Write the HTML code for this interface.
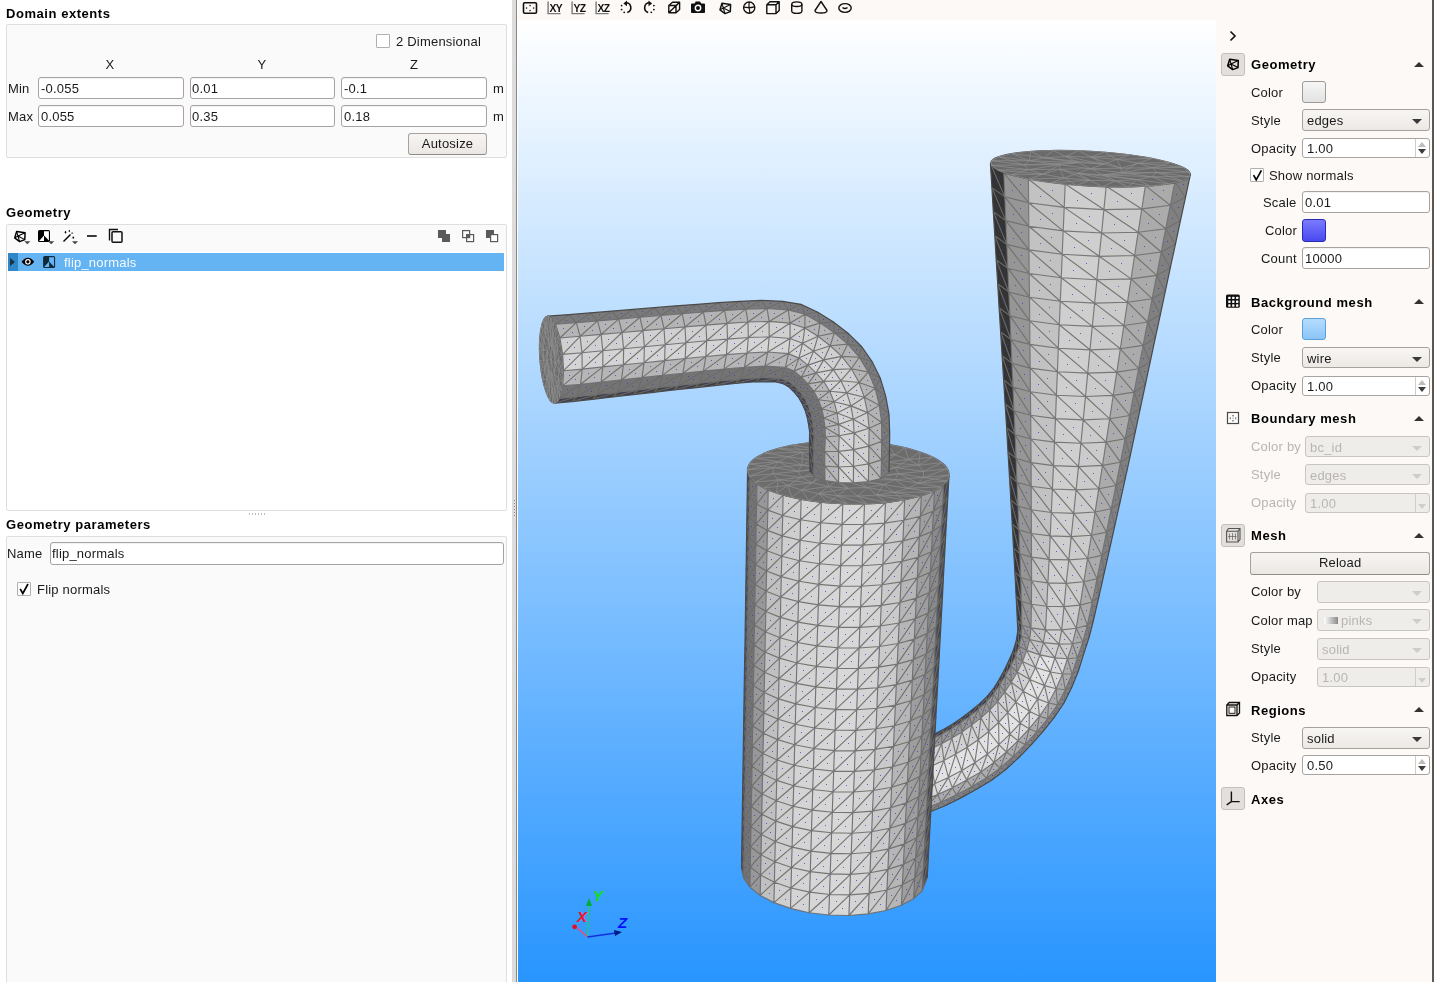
<!DOCTYPE html><html><head><meta charset="utf-8"><style>
*{margin:0;padding:0;box-sizing:border-box}
html,body{width:1434px;height:982px;overflow:hidden;background:#fff;-webkit-font-smoothing:antialiased;font-family:"Liberation Sans",sans-serif;font-size:13px;color:#1a1a1a;letter-spacing:0.2px}
.a{position:absolute}
.t{position:absolute;white-space:nowrap;line-height:15px;height:15px;will-change:transform}
.b{font-weight:bold;letter-spacing:0.55px;color:#000}
.gb{position:absolute;background:#fafafa;border:1px solid #dedede;border-radius:2px}
.in{position:absolute;background:#fff;border:1px solid #a8a39f;border-radius:3px;box-shadow:inset 0 1px 1px rgba(0,0,0,0.06)}
.in span{position:absolute;left:1.8px;top:3px;line-height:15px;will-change:transform}
.btn{position:absolute;will-change:transform;background:linear-gradient(#f7f5f3,#ebe7e3);border:1px solid #a6a19c;border-bottom-color:#8f8a85;border-radius:3px;text-align:center;line-height:20px}
.cb{position:absolute;width:14px;height:14px;background:#fff;border:1px solid #b3afab;border-radius:1px}
.combo{position:absolute;background:linear-gradient(#f8f6f4,#ece8e4);border:1px solid #a6a19c;border-radius:3px}
.combo span{position:absolute;left:4px;top:3px;line-height:15px;will-change:transform}
.combo i{position:absolute;right:7px;top:9px;width:0;height:0;border-left:5px solid transparent;border-right:5px solid transparent;border-top:5px solid #3a3a3a}
.dis{color:#b9b5b1}
.combo.dis{background:#efedea;border-color:#c9c5c1}
.combo.dis i{border-top-color:#d0ccc8}
.spin{position:absolute;background:#fff;border:1px solid #a8a39f;border-radius:3px}
.spin span{position:absolute;left:4px;top:2px;line-height:15px;will-change:transform}
.spin .sb{position:absolute;right:0;top:0;bottom:0;width:14px;border-left:1px solid #d0ccc8}
.spin .up{position:absolute;right:3px;top:3px;border-left:4px solid transparent;border-right:4px solid transparent;border-bottom:5px solid #c0bcb8}
.spin .dn{position:absolute;right:3px;bottom:3px;border-left:4px solid transparent;border-right:4px solid transparent;border-top:5px solid #3c3c3c}
.spin.dis{background:#efedea;border-color:#c9c5c1}
.spin.dis .dn{border-top-color:#d0ccc8}
.spin.dis .up{border-bottom-color:#efedea}
.sw{position:absolute;width:24px;height:23px;border-radius:3px}
.tri{position:absolute;width:0;height:0;border-left:5px solid transparent;border-right:5px solid transparent;border-bottom:5px solid #333}
.ib{position:absolute;width:24px;height:23px;background:#e2dfdc;border:1px solid #c3bfbb;border-radius:3px}
</style></head><body><svg class="a" style="left:0;top:0" width="1434" height="982"><defs><linearGradient id="bg" x1="0" y1="0" x2="0" y2="1"><stop offset="0" stop-color="#ffffff"/><stop offset="1" stop-color="#2895ff"/></linearGradient><clipPath id="vclip"><rect x="518" y="20" width="698" height="962"/></clipPath></defs>
<rect x="518" y="20" width="698" height="962" fill="url(#bg)"/>
<g clip-path="url(#vclip)">
<path d="M990.4,163.6 991.9,187.6 993.3,211.6 994.8,235.7 996.2,259.7 997.7,283.7 999.1,307.7 1000.6,331.7 1002.1,355.7 1003.6,379.8 1005.1,403.8 1006.6,427.8 1008,451.8 1009.4,475.8 1010.8,499.9 1012.2,523.9 1013.5,547.9 1014.9,571.9 1016.1,596 1017.3,620 1017.8,630.7 1016.3,640.6 1013.2,650.8 1008.9,660.6 1004.2,670.2 999.1,679.6 993.5,688.7 986.7,696.9 979,704.3 970.7,711 962.2,717.5 953.5,723.6 944.3,729.1 934.8,733.9 924.9,738 915,742 911.5,746.7 921.8,742.9 932,739 941.9,734.3 951.5,728.8 960.6,722.8 969.5,716.4 978.2,709.6 986.3,702.2 993.5,694 999.7,685.1 1005.4,675.8 1010.7,666.2 1015.5,656.3 1019.2,646 1021.4,635.9 1021.8,625 1021.4,601.3 1020.7,577.5 1019.8,553.7 1018.9,529.9 1018,506.1 1017,482.3 1016.1,458.5 1015.1,434.7 1014,410.9 1013,387.1 1011.9,363.3 1010.9,339.5 1009.9,315.7 1008.8,292 1007.8,268.2 1006.8,244.4 1005.8,220.6 1004.8,196.8 1003.8,173Z" fill="#333333"/>
<path d="M1003.8,173 1004.8,196.8 1005.8,220.6 1006.8,244.4 1007.8,268.2 1008.8,292 1009.9,315.7 1010.9,339.5 1011.9,363.3 1013,387.1 1014,410.9 1015.1,434.7 1016.1,458.5 1017,482.3 1018,506.1 1018.9,529.9 1019.8,553.7 1020.7,577.5 1021.4,601.3 1021.8,625 1021.4,635.9 1019.2,646 1015.5,656.3 1010.7,666.2 1005.4,675.8 999.7,685.1 993.5,694 986.3,702.2 978.2,709.6 969.5,716.4 960.6,722.8 951.5,728.8 941.9,734.3 932,739 921.8,742.9 911.5,746.7 908.7,756.2 919.9,752.6 931,748.6 941.7,743.7 952,738.1 962,731.9 971.6,725.1 980.9,717.9 989.7,710 997.7,701.4 1004.8,692 1011.3,682.2 1017.2,672 1022.5,661.5 1026.7,650.4 1029.7,639.5 1031,627.9 1031.4,604.3 1031.6,580.7 1031.5,557.1 1031.4,533.5 1031.3,509.8 1031.2,486.2 1031.1,462.6 1030.9,439 1030.7,415.3 1030.4,391.7 1030.2,368.1 1029.9,344.4 1029.7,320.8 1029.5,297.2 1029.2,273.5 1029,249.9 1028.8,226.3 1028.6,202.7 1028.4,179Z" fill="#969696"/>
<path d="M1028.4,179 1028.6,202.7 1028.8,226.3 1029,249.9 1029.2,273.5 1029.5,297.2 1029.7,320.8 1029.9,344.4 1030.2,368.1 1030.4,391.7 1030.7,415.3 1030.9,439 1031.1,462.6 1031.2,486.2 1031.3,509.8 1031.4,533.5 1031.5,557.1 1031.6,580.7 1031.4,604.3 1031,627.9 1029.7,639.5 1026.7,650.4 1022.5,661.5 1017.2,672 1011.3,682.2 1004.8,692 997.7,701.4 989.7,710 980.9,717.9 971.6,725.1 962,731.9 952,738.1 941.7,743.7 931,748.6 919.9,752.6 908.7,756.2 906.3,773.8 919.1,770.3 931.7,765.9 943.9,760.4 955.7,754.1 967.2,747.3 978.2,739.7 988.7,731.5 998.6,722.5 1007.7,712.7 1015.9,702.2 1023.3,691.2 1029.8,679.5 1035.5,667.5 1039.9,654.9 1043.4,642.6 1045.5,629.8 1046.8,606.3 1047.9,582.9 1049.1,559.4 1050.2,535.9 1051.3,512.5 1052.4,489 1053.5,465.6 1054.5,442.1 1055.5,418.6 1056.4,395.2 1057.4,371.7 1058.3,348.2 1059.3,324.7 1060.3,301.3 1061.3,277.8 1062.2,254.3 1063.2,230.9 1064.2,207.4 1065.2,183.9Z" fill="#c2c2c2"/>
<path d="M1065.2,183.9 1064.2,207.4 1063.2,230.9 1062.2,254.3 1061.3,277.8 1060.3,301.3 1059.3,324.7 1058.3,348.2 1057.4,371.7 1056.4,395.2 1055.5,418.6 1054.5,442.1 1053.5,465.6 1052.4,489 1051.3,512.5 1050.2,535.9 1049.1,559.4 1047.9,582.9 1046.8,606.3 1045.5,629.8 1043.4,642.6 1039.9,654.9 1035.5,667.5 1029.8,679.5 1023.3,691.2 1015.9,702.2 1007.7,712.7 998.6,722.5 988.7,731.5 978.2,739.7 967.2,747.3 955.7,754.1 943.9,760.4 931.7,765.9 919.1,770.3 906.3,773.8 905.7,792.2 920.4,788.8 934.6,783.7 948.4,777.4 961.8,770.4 974.8,762.8 987.2,754.2 998.9,744.6 1009.9,734.2 1020.2,723.2 1029.4,711.3 1037.7,698.9 1044.5,685.6 1050.4,672 1054.9,657.9 1059,644.1 1061.7,629.8 1064,606.6 1066.2,583.3 1068.8,559.9 1071.2,536.6 1073.7,513.3 1076.1,489.9 1078.5,466.6 1080.9,443.2 1083.2,419.9 1085.5,396.5 1087.7,373.1 1090,349.8 1092.3,326.4 1094.6,303.1 1096.9,279.7 1099.2,256.3 1101.6,233 1103.9,209.6 1106.2,186.3Z" fill="#cfcfcf"/>
<path d="M1106.2,186.3 1103.9,209.6 1101.6,233 1099.2,256.3 1096.9,279.7 1094.6,303.1 1092.3,326.4 1090,349.8 1087.7,373.1 1085.5,396.5 1083.2,419.9 1080.9,443.2 1078.5,466.6 1076.1,489.9 1073.7,513.3 1071.2,536.6 1068.8,559.9 1066.2,583.3 1064,606.6 1061.7,629.8 1059,644.1 1054.9,657.9 1050.4,672 1044.5,685.6 1037.7,698.9 1029.4,711.3 1020.2,723.2 1009.9,734.2 998.9,744.6 987.2,754.2 974.8,762.8 961.8,770.4 948.4,777.4 934.6,783.7 920.4,788.8 905.7,792.2 906.5,803.7 922.4,800.2 937.7,794.6 952.4,787.7 966.7,780.1 980.8,771.9 994,762.5 1006.4,752 1018.1,740.7 1029.1,728.8 1039.4,716.3 1048.6,703 1056.1,688.8 1062.5,674 1067.5,658.7 1072.5,643.7 1076.2,628.2 1080.1,605.1 1083.8,581.8 1087.6,558.5 1091.4,535.3 1095.1,512 1098.8,488.7 1102.5,465.4 1106.1,442.1 1109.7,418.8 1113.2,395.4 1116.8,372.1 1120.3,348.8 1123.9,325.5 1127.5,302.2 1131.1,278.9 1134.6,255.5 1138.2,232.2 1141.8,208.9 1145.4,185.6Z" fill="#cbcbcb"/>
<path d="M1145.4,185.6 1141.8,208.9 1138.2,232.2 1134.6,255.5 1131.1,278.9 1127.5,302.2 1123.9,325.5 1120.3,348.8 1116.8,372.1 1113.2,395.4 1109.7,418.8 1106.1,442.1 1102.5,465.4 1098.8,488.7 1095.1,512 1091.4,535.3 1087.6,558.5 1083.8,581.8 1080.1,605.1 1076.2,628.2 1072.5,643.7 1067.5,658.7 1062.5,674 1056.1,688.8 1048.6,703 1039.4,716.3 1029.1,728.8 1018.1,740.7 1006.4,752 994,762.5 980.8,771.9 966.7,780.1 952.4,787.7 937.7,794.6 922.4,800.2 906.5,803.7 908.3,811.9 925,808.3 941,802.3 956.4,794.8 971.6,786.8 986.3,778.1 1000.1,768 1013,756.7 1025.1,744.6 1036.7,732 1047.6,718.8 1057.4,704.8 1065.3,689.7 1072.1,674 1077.4,657.8 1082.9,641.7 1087.3,625.3 1092.2,602 1097,578.7 1101.8,555.4 1106.5,532.1 1111.2,508.8 1115.9,485.5 1120.5,462.2 1125.1,438.8 1129.6,415.5 1134.1,392.1 1138.6,368.7 1143.1,345.4 1147.6,322 1152.1,298.7 1156.7,275.4 1161.2,252 1165.7,228.7 1170.3,205.3 1174.8,182Z" fill="#ababab"/>
<path d="M1174.8,182 1170.3,205.3 1165.7,228.7 1161.2,252 1156.7,275.4 1152.1,298.7 1147.6,322 1143.1,345.4 1138.6,368.7 1134.1,392.1 1129.6,415.5 1125.1,438.8 1120.5,462.2 1115.9,485.5 1111.2,508.8 1106.5,532.1 1101.8,555.4 1097,578.7 1092.2,602 1087.3,625.3 1082.9,641.7 1077.4,657.8 1072.1,674 1065.3,689.7 1057.4,704.8 1047.6,718.8 1036.7,732 1025.1,744.6 1013,756.7 1000.1,768 986.3,778.1 971.6,786.8 956.4,794.8 941,802.3 925,808.3 908.3,811.9 912,816 929.2,812.2 945.6,805.5 961.4,797.6 976.9,789.1 992,779.9 1006.1,769.2 1019.1,757.3 1031.4,744.6 1043.1,731.4 1054.1,717.6 1064,703 1071.9,687.1 1078.5,670.7 1083.7,653.9 1089.2,637.1 1093.5,620 1098.9,596.6 1104.2,573.1 1109.5,549.7 1114.7,526.2 1119.9,502.8 1125.1,479.3 1130.2,455.8 1135.2,432.3 1140.2,408.8 1145.2,385.3 1150.2,361.8 1155.2,338.3 1160.3,314.8 1165.3,291.3 1170.3,267.8 1175.4,244.3 1180.4,220.8 1185.5,197.3 1190.5,173.8Z" fill="#808080"/>
<path d="M1026.7,650.4 1022.5,661.5 1017.2,672 1011.3,682.2 1004.8,692 997.7,701.4 989.7,710 980.9,717.9 971.6,725.1 962,731.9 952,738.1 941.7,743.7 931,748.6 919.9,752.6 908.7,756.2 906.3,773.8 919.1,770.3 931.7,765.9 943.9,760.4 955.7,754.1 967.2,747.3 978.2,739.7 988.7,731.5 998.6,722.5 1007.7,712.7 1015.9,702.2 1023.3,691.2 1029.8,679.5 1035.5,667.5 1039.9,654.9Z" fill="#ffffff" fill-opacity="0.25"/>
<path d="M1039.9,654.9 1035.5,667.5 1029.8,679.5 1023.3,691.2 1015.9,702.2 1007.7,712.7 998.6,722.5 988.7,731.5 978.2,739.7 967.2,747.3 955.7,754.1 943.9,760.4 931.7,765.9 919.1,770.3 906.3,773.8 905.7,792.2 920.4,788.8 934.6,783.7 948.4,777.4 961.8,770.4 974.8,762.8 987.2,754.2 998.9,744.6 1009.9,734.2 1020.2,723.2 1029.4,711.3 1037.7,698.9 1044.5,685.6 1050.4,672 1054.9,657.9Z" fill="#ffffff" fill-opacity="0.4"/>
<path d="M1054.9,657.9 1050.4,672 1044.5,685.6 1037.7,698.9 1029.4,711.3 1020.2,723.2 1009.9,734.2 998.9,744.6 987.2,754.2 974.8,762.8 961.8,770.4 948.4,777.4 934.6,783.7 920.4,788.8 905.7,792.2 906.5,803.7 922.4,800.2 937.7,794.6 952.4,787.7 966.7,780.1 980.8,771.9 994,762.5 1006.4,752 1018.1,740.7 1029.1,728.8 1039.4,716.3 1048.6,703 1056.1,688.8 1062.5,674 1067.5,658.7Z" fill="#ffffff" fill-opacity="0.3"/>
<path d="M990.4,163.6 1003.8,173 1028.4,179 1065.2,183.9 1106.2,186.3 1145.4,185.6 1174.8,182 1190.5,173.8 M991.9,187.6 1004.8,196.8 1028.6,202.7 1064.2,207.4 1103.9,209.6 1141.8,208.9 1170.3,205.3 1185.5,197.3 M993.3,211.6 1005.8,220.6 1028.8,226.3 1063.2,230.9 1101.6,233 1138.2,232.2 1165.7,228.7 1180.4,220.8 M994.8,235.7 1006.8,244.4 1029,249.9 1062.2,254.3 1099.2,256.3 1134.6,255.5 1161.2,252 1175.4,244.3 M996.2,259.7 1007.8,268.2 1029.2,273.5 1061.3,277.8 1096.9,279.7 1131.1,278.9 1156.7,275.4 1170.3,267.8 M997.7,283.7 1008.8,292 1029.5,297.2 1060.3,301.3 1094.6,303.1 1127.5,302.2 1152.1,298.7 1165.3,291.3 M999.1,307.7 1009.9,315.7 1029.7,320.8 1059.3,324.7 1092.3,326.4 1123.9,325.5 1147.6,322 1160.3,314.8 M1000.6,331.7 1010.9,339.5 1029.9,344.4 1058.3,348.2 1090,349.8 1120.3,348.8 1143.1,345.4 1155.2,338.3 M1002.1,355.7 1011.9,363.3 1030.2,368.1 1057.4,371.7 1087.7,373.1 1116.8,372.1 1138.6,368.7 1150.2,361.8 M1003.6,379.8 1013,387.1 1030.4,391.7 1056.4,395.2 1085.5,396.5 1113.2,395.4 1134.1,392.1 1145.2,385.3 M1005.1,403.8 1014,410.9 1030.7,415.3 1055.5,418.6 1083.2,419.9 1109.7,418.8 1129.6,415.5 1140.2,408.8 M1006.6,427.8 1015.1,434.7 1030.9,439 1054.5,442.1 1080.9,443.2 1106.1,442.1 1125.1,438.8 1135.2,432.3 M1008,451.8 1016.1,458.5 1031.1,462.6 1053.5,465.6 1078.5,466.6 1102.5,465.4 1120.5,462.2 1130.2,455.8 M1009.4,475.8 1017,482.3 1031.2,486.2 1052.4,489 1076.1,489.9 1098.8,488.7 1115.9,485.5 1125.1,479.3 M1010.8,499.9 1018,506.1 1031.3,509.8 1051.3,512.5 1073.7,513.3 1095.1,512 1111.2,508.8 1119.9,502.8 M1012.2,523.9 1018.9,529.9 1031.4,533.5 1050.2,535.9 1071.2,536.6 1091.4,535.3 1106.5,532.1 1114.7,526.2 M1013.5,547.9 1019.8,553.7 1031.5,557.1 1049.1,559.4 1068.8,559.9 1087.6,558.5 1101.8,555.4 1109.5,549.7 M1014.9,571.9 1020.7,577.5 1031.6,580.7 1047.9,582.9 1066.2,583.3 1083.8,581.8 1097,578.7 1104.2,573.1 M1016.1,596 1021.4,601.3 1031.4,604.3 1046.8,606.3 1064,606.6 1080.1,605.1 1092.2,602 1098.9,596.6 M1017.3,620 1021.8,625 1031,627.9 1045.5,629.8 1061.7,629.8 1076.2,628.2 1087.3,625.3 1093.5,620 M1017.8,630.7 1021.4,635.9 1029.7,639.5 1043.4,642.6 1059,644.1 1072.5,643.7 1082.9,641.7 1089.2,637.1 M1016.3,640.6 1019.2,646 1026.7,650.4 1039.9,654.9 1054.9,657.9 1067.5,658.7 1077.4,657.8 1083.7,653.9 M1013.2,650.8 1015.5,656.3 1022.5,661.5 1035.5,667.5 1050.4,672 1062.5,674 1072.1,674 1078.5,670.7 M1008.9,660.6 1010.7,666.2 1017.2,672 1029.8,679.5 1044.5,685.6 1056.1,688.8 1065.3,689.7 1071.9,687.1 M1004.2,670.2 1005.4,675.8 1011.3,682.2 1023.3,691.2 1037.7,698.9 1048.6,703 1057.4,704.8 1064,703 M999.1,679.6 999.7,685.1 1004.8,692 1015.9,702.2 1029.4,711.3 1039.4,716.3 1047.6,718.8 1054.1,717.6 M993.5,688.7 993.5,694 997.7,701.4 1007.7,712.7 1020.2,723.2 1029.1,728.8 1036.7,732 1043.1,731.4 M986.7,696.9 986.3,702.2 989.7,710 998.6,722.5 1009.9,734.2 1018.1,740.7 1025.1,744.6 1031.4,744.6 M979,704.3 978.2,709.6 980.9,717.9 988.7,731.5 998.9,744.6 1006.4,752 1013,756.7 1019.1,757.3 M970.7,711 969.5,716.4 971.6,725.1 978.2,739.7 987.2,754.2 994,762.5 1000.1,768 1006.1,769.2 M962.2,717.5 960.6,722.8 962,731.9 967.2,747.3 974.8,762.8 980.8,771.9 986.3,778.1 992,779.9 M953.5,723.6 951.5,728.8 952,738.1 955.7,754.1 961.8,770.4 966.7,780.1 971.6,786.8 976.9,789.1 M944.3,729.1 941.9,734.3 941.7,743.7 943.9,760.4 948.4,777.4 952.4,787.7 956.4,794.8 961.4,797.6 M934.8,733.9 932,739 931,748.6 931.7,765.9 934.6,783.7 937.7,794.6 941,802.3 945.6,805.5 M924.9,738 921.8,742.9 919.9,752.6 919.1,770.3 920.4,788.8 922.4,800.2 925,808.3 929.2,812.2 M915,742 911.5,746.7 908.7,756.2 906.3,773.8 905.7,792.2 906.5,803.7 908.3,811.9 912,816 M1003.8,173 1004.8,196.8 1005.8,220.6 1006.8,244.4 1007.8,268.2 1008.8,292 1009.9,315.7 1010.9,339.5 1011.9,363.3 1013,387.1 1014,410.9 1015.1,434.7 1016.1,458.5 1017,482.3 1018,506.1 1018.9,529.9 1019.8,553.7 1020.7,577.5 1021.4,601.3 1021.8,625 1021.4,635.9 1019.2,646 1015.5,656.3 1010.7,666.2 1005.4,675.8 999.7,685.1 993.5,694 986.3,702.2 978.2,709.6 969.5,716.4 960.6,722.8 951.5,728.8 941.9,734.3 932,739 921.8,742.9 911.5,746.7 M1028.4,179 1028.6,202.7 1028.8,226.3 1029,249.9 1029.2,273.5 1029.5,297.2 1029.7,320.8 1029.9,344.4 1030.2,368.1 1030.4,391.7 1030.7,415.3 1030.9,439 1031.1,462.6 1031.2,486.2 1031.3,509.8 1031.4,533.5 1031.5,557.1 1031.6,580.7 1031.4,604.3 1031,627.9 1029.7,639.5 1026.7,650.4 1022.5,661.5 1017.2,672 1011.3,682.2 1004.8,692 997.7,701.4 989.7,710 980.9,717.9 971.6,725.1 962,731.9 952,738.1 941.7,743.7 931,748.6 919.9,752.6 908.7,756.2 M1065.2,183.9 1064.2,207.4 1063.2,230.9 1062.2,254.3 1061.3,277.8 1060.3,301.3 1059.3,324.7 1058.3,348.2 1057.4,371.7 1056.4,395.2 1055.5,418.6 1054.5,442.1 1053.5,465.6 1052.4,489 1051.3,512.5 1050.2,535.9 1049.1,559.4 1047.9,582.9 1046.8,606.3 1045.5,629.8 1043.4,642.6 1039.9,654.9 1035.5,667.5 1029.8,679.5 1023.3,691.2 1015.9,702.2 1007.7,712.7 998.6,722.5 988.7,731.5 978.2,739.7 967.2,747.3 955.7,754.1 943.9,760.4 931.7,765.9 919.1,770.3 906.3,773.8 M1106.2,186.3 1103.9,209.6 1101.6,233 1099.2,256.3 1096.9,279.7 1094.6,303.1 1092.3,326.4 1090,349.8 1087.7,373.1 1085.5,396.5 1083.2,419.9 1080.9,443.2 1078.5,466.6 1076.1,489.9 1073.7,513.3 1071.2,536.6 1068.8,559.9 1066.2,583.3 1064,606.6 1061.7,629.8 1059,644.1 1054.9,657.9 1050.4,672 1044.5,685.6 1037.7,698.9 1029.4,711.3 1020.2,723.2 1009.9,734.2 998.9,744.6 987.2,754.2 974.8,762.8 961.8,770.4 948.4,777.4 934.6,783.7 920.4,788.8 905.7,792.2 M1145.4,185.6 1141.8,208.9 1138.2,232.2 1134.6,255.5 1131.1,278.9 1127.5,302.2 1123.9,325.5 1120.3,348.8 1116.8,372.1 1113.2,395.4 1109.7,418.8 1106.1,442.1 1102.5,465.4 1098.8,488.7 1095.1,512 1091.4,535.3 1087.6,558.5 1083.8,581.8 1080.1,605.1 1076.2,628.2 1072.5,643.7 1067.5,658.7 1062.5,674 1056.1,688.8 1048.6,703 1039.4,716.3 1029.1,728.8 1018.1,740.7 1006.4,752 994,762.5 980.8,771.9 966.7,780.1 952.4,787.7 937.7,794.6 922.4,800.2 906.5,803.7 M1174.8,182 1170.3,205.3 1165.7,228.7 1161.2,252 1156.7,275.4 1152.1,298.7 1147.6,322 1143.1,345.4 1138.6,368.7 1134.1,392.1 1129.6,415.5 1125.1,438.8 1120.5,462.2 1115.9,485.5 1111.2,508.8 1106.5,532.1 1101.8,555.4 1097,578.7 1092.2,602 1087.3,625.3 1082.9,641.7 1077.4,657.8 1072.1,674 1065.3,689.7 1057.4,704.8 1047.6,718.8 1036.7,732 1025.1,744.6 1013,756.7 1000.1,768 986.3,778.1 971.6,786.8 956.4,794.8 941,802.3 925,808.3 908.3,811.9 M990.4,163.6 1004.8,196.8 M1003.8,173 1028.6,202.7 M1028.4,179 1064.2,207.4 M1065.2,183.9 1103.9,209.6 M1106.2,186.3 1141.8,208.9 M1145.4,185.6 1170.3,205.3 M1174.8,182 1185.5,197.3 M991.9,187.6 1005.8,220.6 M1004.8,196.8 1028.8,226.3 M1028.6,202.7 1063.2,230.9 M1064.2,207.4 1101.6,233 M1103.9,209.6 1138.2,232.2 M1141.8,208.9 1165.7,228.7 M1170.3,205.3 1180.4,220.8 M993.3,211.6 1006.8,244.4 M1005.8,220.6 1029,249.9 M1028.8,226.3 1062.2,254.3 M1063.2,230.9 1099.2,256.3 M1101.6,233 1134.6,255.5 M1138.2,232.2 1161.2,252 M1165.7,228.7 1175.4,244.3 M994.8,235.7 1007.8,268.2 M1006.8,244.4 1029.2,273.5 M1029,249.9 1061.3,277.8 M1062.2,254.3 1096.9,279.7 M1099.2,256.3 1131.1,278.9 M1134.6,255.5 1156.7,275.4 M1161.2,252 1170.3,267.8 M996.2,259.7 1008.8,292 M1007.8,268.2 1029.5,297.2 M1029.2,273.5 1060.3,301.3 M1061.3,277.8 1094.6,303.1 M1096.9,279.7 1127.5,302.2 M1131.1,278.9 1152.1,298.7 M1156.7,275.4 1165.3,291.3 M997.7,283.7 1009.9,315.7 M1008.8,292 1029.7,320.8 M1029.5,297.2 1059.3,324.7 M1060.3,301.3 1092.3,326.4 M1094.6,303.1 1123.9,325.5 M1127.5,302.2 1147.6,322 M1152.1,298.7 1160.3,314.8 M999.1,307.7 1010.9,339.5 M1009.9,315.7 1029.9,344.4 M1029.7,320.8 1058.3,348.2 M1059.3,324.7 1090,349.8 M1092.3,326.4 1120.3,348.8 M1123.9,325.5 1143.1,345.4 M1147.6,322 1155.2,338.3 M1000.6,331.7 1011.9,363.3 M1010.9,339.5 1030.2,368.1 M1029.9,344.4 1057.4,371.7 M1058.3,348.2 1087.7,373.1 M1090,349.8 1116.8,372.1 M1120.3,348.8 1138.6,368.7 M1143.1,345.4 1150.2,361.8 M1002.1,355.7 1013,387.1 M1011.9,363.3 1030.4,391.7 M1030.2,368.1 1056.4,395.2 M1057.4,371.7 1085.5,396.5 M1087.7,373.1 1113.2,395.4 M1116.8,372.1 1134.1,392.1 M1138.6,368.7 1145.2,385.3 M1003.6,379.8 1014,410.9 M1013,387.1 1030.7,415.3 M1030.4,391.7 1055.5,418.6 M1056.4,395.2 1083.2,419.9 M1085.5,396.5 1109.7,418.8 M1113.2,395.4 1129.6,415.5 M1134.1,392.1 1140.2,408.8 M1005.1,403.8 1015.1,434.7 M1014,410.9 1030.9,439 M1030.7,415.3 1054.5,442.1 M1055.5,418.6 1080.9,443.2 M1083.2,419.9 1106.1,442.1 M1109.7,418.8 1125.1,438.8 M1129.6,415.5 1135.2,432.3 M1006.6,427.8 1016.1,458.5 M1015.1,434.7 1031.1,462.6 M1030.9,439 1053.5,465.6 M1054.5,442.1 1078.5,466.6 M1080.9,443.2 1102.5,465.4 M1106.1,442.1 1120.5,462.2 M1125.1,438.8 1130.2,455.8 M1008,451.8 1017,482.3 M1016.1,458.5 1031.2,486.2 M1031.1,462.6 1052.4,489 M1053.5,465.6 1076.1,489.9 M1078.5,466.6 1098.8,488.7 M1102.5,465.4 1115.9,485.5 M1120.5,462.2 1125.1,479.3 M1009.4,475.8 1018,506.1 M1017,482.3 1031.3,509.8 M1031.2,486.2 1051.3,512.5 M1052.4,489 1073.7,513.3 M1076.1,489.9 1095.1,512 M1098.8,488.7 1111.2,508.8 M1115.9,485.5 1119.9,502.8 M1010.8,499.9 1018.9,529.9 M1018,506.1 1031.4,533.5 M1031.3,509.8 1050.2,535.9 M1051.3,512.5 1071.2,536.6 M1073.7,513.3 1091.4,535.3 M1095.1,512 1106.5,532.1 M1111.2,508.8 1114.7,526.2 M1012.2,523.9 1019.8,553.7 M1018.9,529.9 1031.5,557.1 M1031.4,533.5 1049.1,559.4 M1050.2,535.9 1068.8,559.9 M1071.2,536.6 1087.6,558.5 M1091.4,535.3 1101.8,555.4 M1106.5,532.1 1109.5,549.7 M1013.5,547.9 1020.7,577.5 M1019.8,553.7 1031.6,580.7 M1031.5,557.1 1047.9,582.9 M1049.1,559.4 1066.2,583.3 M1068.8,559.9 1083.8,581.8 M1087.6,558.5 1097,578.7 M1101.8,555.4 1104.2,573.1 M1014.9,571.9 1021.4,601.3 M1020.7,577.5 1031.4,604.3 M1031.6,580.7 1046.8,606.3 M1047.9,582.9 1064,606.6 M1066.2,583.3 1080.1,605.1 M1083.8,581.8 1092.2,602 M1097,578.7 1098.9,596.6 M1016.1,596 1021.8,625 M1021.4,601.3 1031,627.9 M1031.4,604.3 1045.5,629.8 M1046.8,606.3 1061.7,629.8 M1064,606.6 1076.2,628.2 M1080.1,605.1 1087.3,625.3 M1092.2,602 1093.5,620 M1017.3,620 1021.4,635.9 M1021.8,625 1029.7,639.5 M1031,627.9 1043.4,642.6 M1045.5,629.8 1059,644.1 M1061.7,629.8 1072.5,643.7 M1076.2,628.2 1082.9,641.7 M1087.3,625.3 1089.2,637.1 M1017.8,630.7 1019.2,646 M1021.4,635.9 1026.7,650.4 M1029.7,639.5 1039.9,654.9 M1043.4,642.6 1054.9,657.9 M1059,644.1 1067.5,658.7 M1072.5,643.7 1077.4,657.8 M1082.9,641.7 1083.7,653.9 M1016.3,640.6 1015.5,656.3 M1019.2,646 1022.5,661.5 M1026.7,650.4 1035.5,667.5 M1039.9,654.9 1050.4,672 M1054.9,657.9 1062.5,674 M1067.5,658.7 1072.1,674 M1077.4,657.8 1078.5,670.7 M1013.2,650.8 1010.7,666.2 M1015.5,656.3 1017.2,672 M1022.5,661.5 1029.8,679.5 M1035.5,667.5 1044.5,685.6 M1050.4,672 1056.1,688.8 M1062.5,674 1065.3,689.7 M1072.1,674 1071.9,687.1 M1008.9,660.6 1005.4,675.8 M1010.7,666.2 1011.3,682.2 M1017.2,672 1023.3,691.2 M1029.8,679.5 1037.7,698.9 M1044.5,685.6 1048.6,703 M1056.1,688.8 1057.4,704.8 M1065.3,689.7 1064,703 M1004.2,670.2 999.7,685.1 M1005.4,675.8 1004.8,692 M1011.3,682.2 1015.9,702.2 M1023.3,691.2 1029.4,711.3 M1037.7,698.9 1039.4,716.3 M1048.6,703 1047.6,718.8 M1057.4,704.8 1054.1,717.6 M999.1,679.6 993.5,694 M999.7,685.1 997.7,701.4 M1004.8,692 1007.7,712.7 M1015.9,702.2 1020.2,723.2 M1029.4,711.3 1029.1,728.8 M1039.4,716.3 1036.7,732 M1047.6,718.8 1043.1,731.4 M993.5,688.7 986.3,702.2 M993.5,694 989.7,710 M997.7,701.4 998.6,722.5 M1007.7,712.7 1009.9,734.2 M1020.2,723.2 1018.1,740.7 M1029.1,728.8 1025.1,744.6 M1036.7,732 1031.4,744.6 M986.7,696.9 978.2,709.6 M986.3,702.2 980.9,717.9 M989.7,710 988.7,731.5 M998.6,722.5 998.9,744.6 M1009.9,734.2 1006.4,752 M1018.1,740.7 1013,756.7 M1025.1,744.6 1019.1,757.3 M979,704.3 969.5,716.4 M978.2,709.6 971.6,725.1 M980.9,717.9 978.2,739.7 M988.7,731.5 987.2,754.2 M998.9,744.6 994,762.5 M1006.4,752 1000.1,768 M1013,756.7 1006.1,769.2 M970.7,711 960.6,722.8 M969.5,716.4 962,731.9 M971.6,725.1 967.2,747.3 M978.2,739.7 974.8,762.8 M987.2,754.2 980.8,771.9 M994,762.5 986.3,778.1 M1000.1,768 992,779.9 M962.2,717.5 951.5,728.8 M960.6,722.8 952,738.1 M962,731.9 955.7,754.1 M967.2,747.3 961.8,770.4 M974.8,762.8 966.7,780.1 M980.8,771.9 971.6,786.8 M986.3,778.1 976.9,789.1 M953.5,723.6 941.9,734.3 M951.5,728.8 941.7,743.7 M952,738.1 943.9,760.4 M955.7,754.1 948.4,777.4 M961.8,770.4 952.4,787.7 M966.7,780.1 956.4,794.8 M971.6,786.8 961.4,797.6 M944.3,729.1 932,739 M941.9,734.3 931,748.6 M941.7,743.7 931.7,765.9 M943.9,760.4 934.6,783.7 M948.4,777.4 937.7,794.6 M952.4,787.7 941,802.3 M956.4,794.8 945.6,805.5 M934.8,733.9 921.8,742.9 M932,739 919.9,752.6 M931,748.6 919.1,770.3 M931.7,765.9 920.4,788.8 M934.6,783.7 922.4,800.2 M937.7,794.6 925,808.3 M941,802.3 929.2,812.2 M924.9,738 911.5,746.7 M921.8,742.9 908.7,756.2 M919.9,752.6 906.3,773.8 M919.1,770.3 905.7,792.2 M920.4,788.8 906.5,803.7 M922.4,800.2 908.3,811.9 M925,808.3 912,816" fill="none" stroke="#6e6e6e" stroke-width="1.15" stroke-opacity="0.9"/>
<path d="M995 182h1v1h-1zM999 177h1v1h-1zM1012 190h1v1h-1zM1020 184h1v1h-1zM1040 196h1v1h-1zM1052 190h1v1h-1zM1077 200h1v1h-1zM1091 193h1v1h-1zM1117 201h1v1h-1zM1131 193h1v1h-1zM1152 199h1v1h-1zM1163 190h1v1h-1zM1176 194h1v1h-1zM1183 184h1v1h-1zM996 206h1v1h-1zM1000 201h1v1h-1zM1013 214h1v1h-1zM1020 208h1v1h-1zM1040 219h1v1h-1zM1052 213h1v1h-1zM1076 223h1v1h-1zM1089 216h1v1h-1zM1114 224h1v1h-1zM1127 216h1v1h-1zM1148 223h1v1h-1zM1159 214h1v1h-1zM1172 218h1v1h-1zM1178 207h1v1h-1zM998 230h1v1h-1zM1001 225h1v1h-1zM1013 238h1v1h-1zM1021 232h1v1h-1zM1040 243h1v1h-1zM1051 237h1v1h-1zM1074 247h1v1h-1zM1088 240h1v1h-1zM1111 248h1v1h-1zM1124 240h1v1h-1zM1144 246h1v1h-1zM1155 237h1v1h-1zM1167 241h1v1h-1zM1173 231h1v1h-1zM999 254h1v1h-1zM1003 249h1v1h-1zM1014 262h1v1h-1zM1021 255h1v1h-1zM1039 267h1v1h-1zM1050 260h1v1h-1zM1073 270h1v1h-1zM1086 263h1v1h-1zM1109 271h1v1h-1zM1121 263h1v1h-1zM1140 269h1v1h-1zM1150 260h1v1h-1zM1162 265h1v1h-1zM1168 254h1v1h-1zM1000 278h1v1h-1zM1004 273h1v1h-1zM1015 285h1v1h-1zM1022 279h1v1h-1zM1039 290h1v1h-1zM1050 284h1v1h-1zM1072 294h1v1h-1zM1084 286h1v1h-1zM1106 294h1v1h-1zM1118 286h1v1h-1zM1136 293h1v1h-1zM1146 284h1v1h-1zM1158 288h1v1h-1zM1164 278h1v1h-1zM1002 302h1v1h-1zM1005 297h1v1h-1zM1016 309h1v1h-1zM1022 303h1v1h-1zM1039 314h1v1h-1zM1049 307h1v1h-1zM1070 317h1v1h-1zM1082 310h1v1h-1zM1103 318h1v1h-1zM1115 310h1v1h-1zM1132 316h1v1h-1zM1142 307h1v1h-1zM1153 311h1v1h-1zM1159 301h1v1h-1zM1003 326h1v1h-1zM1006 321h1v1h-1zM1016 333h1v1h-1zM1023 326h1v1h-1zM1039 337h1v1h-1zM1049 331h1v1h-1zM1069 340h1v1h-1zM1080 333h1v1h-1zM1100 341h1v1h-1zM1112 333h1v1h-1zM1129 339h1v1h-1zM1138 330h1v1h-1zM1148 335h1v1h-1zM1154 325h1v1h-1zM1004 350h1v1h-1zM1007 344h1v1h-1zM1017 356h1v1h-1zM1023 350h1v1h-1zM1039 361h1v1h-1zM1048 354h1v1h-1zM1067 364h1v1h-1zM1078 357h1v1h-1zM1098 365h1v1h-1zM1109 356h1v1h-1zM1125 363h1v1h-1zM1133 354h1v1h-1zM1143 358h1v1h-1zM1149 348h1v1h-1zM1006 374h1v1h-1zM1008 368h1v1h-1zM1018 380h1v1h-1zM1024 374h1v1h-1zM1038 384h1v1h-1zM1047 378h1v1h-1zM1066 387h1v1h-1zM1076 380h1v1h-1zM1095 388h1v1h-1zM1105 380h1v1h-1zM1121 386h1v1h-1zM1129 377h1v1h-1zM1139 382h1v1h-1zM1144 371h1v1h-1zM1007 398h1v1h-1zM1010 392h1v1h-1zM1019 404h1v1h-1zM1024 398h1v1h-1zM1038 408h1v1h-1zM1047 401h1v1h-1zM1065 411h1v1h-1zM1075 403h1v1h-1zM1092 411h1v1h-1zM1102 403h1v1h-1zM1117 409h1v1h-1zM1125 400h1v1h-1zM1134 405h1v1h-1zM1139 395h1v1h-1zM1008 422h1v1h-1zM1011 416h1v1h-1zM1020 428h1v1h-1zM1025 421h1v1h-1zM1038 432h1v1h-1zM1046 425h1v1h-1zM1063 434h1v1h-1zM1073 427h1v1h-1zM1090 435h1v1h-1zM1099 426h1v1h-1zM1113 433h1v1h-1zM1121 424h1v1h-1zM1129 428h1v1h-1zM1135 418h1v1h-1zM1010 446h1v1h-1zM1012 440h1v1h-1zM1020 451h1v1h-1zM1025 445h1v1h-1zM1038 455h1v1h-1zM1046 448h1v1h-1zM1062 458h1v1h-1zM1071 450h1v1h-1zM1087 458h1v1h-1zM1096 450h1v1h-1zM1109 456h1v1h-1zM1117 447h1v1h-1zM1125 452h1v1h-1zM1130 442h1v1h-1zM1011 469h1v1h-1zM1013 464h1v1h-1zM1021 475h1v1h-1zM1026 469h1v1h-1zM1038 479h1v1h-1zM1045 472h1v1h-1zM1060 481h1v1h-1zM1069 474h1v1h-1zM1084 481h1v1h-1zM1093 473h1v1h-1zM1105 479h1v1h-1zM1112 471h1v1h-1zM1120 475h1v1h-1zM1125 465h1v1h-1zM1012 493h1v1h-1zM1014 488h1v1h-1zM1022 499h1v1h-1zM1026 492h1v1h-1zM1037 502h1v1h-1zM1045 495h1v1h-1zM1059 504h1v1h-1zM1067 497h1v1h-1zM1081 505h1v1h-1zM1090 496h1v1h-1zM1101 503h1v1h-1zM1108 494h1v1h-1zM1115 499h1v1h-1zM1120 489h1v1h-1zM1013 517h1v1h-1zM1015 511h1v1h-1zM1022 523h1v1h-1zM1026 516h1v1h-1zM1037 526h1v1h-1zM1044 519h1v1h-1zM1057 528h1v1h-1zM1065 520h1v1h-1zM1078 528h1v1h-1zM1086 520h1v1h-1zM1097 526h1v1h-1zM1104 517h1v1h-1zM1110 522h1v1h-1zM1115 512h1v1h-1zM1015 541h1v1h-1zM1016 535h1v1h-1zM1023 546h1v1h-1zM1027 540h1v1h-1zM1037 549h1v1h-1zM1043 542h1v1h-1zM1056 551h1v1h-1zM1063 544h1v1h-1zM1075 551h1v1h-1zM1083 543h1v1h-1zM1093 549h1v1h-1zM1099 540h1v1h-1zM1105 545h1v1h-1zM1110 536h1v1h-1zM1016 565h1v1h-1zM1017 559h1v1h-1zM1024 570h1v1h-1zM1027 563h1v1h-1zM1037 573h1v1h-1zM1042 566h1v1h-1zM1054 575h1v1h-1zM1061 567h1v1h-1zM1072 575h1v1h-1zM1080 566h1v1h-1zM1089 573h1v1h-1zM1095 564h1v1h-1zM1101 569h1v1h-1zM1105 559h1v1h-1zM1017 589h1v1h-1zM1018 583h1v1h-1zM1024 594h1v1h-1zM1027 587h1v1h-1zM1036 597h1v1h-1zM1042 589h1v1h-1zM1052 598h1v1h-1zM1059 590h1v1h-1zM1070 598h1v1h-1zM1076 590h1v1h-1zM1085 596h1v1h-1zM1091 587h1v1h-1zM1096 592h1v1h-1zM1100 582h1v1h-1zM1018 613h1v1h-1zM1019 607h1v1h-1zM1024 618h1v1h-1zM1027 611h1v1h-1zM1035 620h1v1h-1zM1041 613h1v1h-1zM1051 621h1v1h-1zM1057 614h1v1h-1zM1067 621h1v1h-1zM1073 613h1v1h-1zM1081 619h1v1h-1zM1086 610h1v1h-1zM1091 615h1v1h-1zM1094 606h1v1h-1zM1018 628h1v1h-1zM1020 626h1v1h-1zM1024 633h1v1h-1zM1027 630h1v1h-1zM1034 636h1v1h-1zM1039 633h1v1h-1zM1049 638h1v1h-1zM1055 634h1v1h-1zM1064 639h1v1h-1zM1070 633h1v1h-1zM1077 637h1v1h-1zM1082 631h1v1h-1zM1086 634h1v1h-1zM1089 627h1v1h-1zM1017 639h1v1h-1zM1019 637h1v1h-1zM1022 644h1v1h-1zM1025 641h1v1h-1zM1032 648h1v1h-1zM1037 645h1v1h-1zM1046 651h1v1h-1zM1052 648h1v1h-1zM1060 653h1v1h-1zM1066 648h1v1h-1zM1072 653h1v1h-1zM1077 647h1v1h-1zM1081 651h1v1h-1zM1085 644h1v1h-1zM1014 649h1v1h-1zM1017 647h1v1h-1zM1019 654h1v1h-1zM1022 652h1v1h-1zM1028 659h1v1h-1zM1034 657h1v1h-1zM1041 664h1v1h-1zM1048 661h1v1h-1zM1055 667h1v1h-1zM1061 663h1v1h-1zM1067 668h1v1h-1zM1072 663h1v1h-1zM1075 667h1v1h-1zM1079 660h1v1h-1zM1010 659h1v1h-1zM1013 657h1v1h-1zM1014 664h1v1h-1zM1018 663h1v1h-1zM1023 670h1v1h-1zM1029 669h1v1h-1zM1036 677h1v1h-1zM1043 675h1v1h-1zM1050 682h1v1h-1zM1056 678h1v1h-1zM1061 684h1v1h-1zM1066 679h1v1h-1zM1069 683h1v1h-1zM1074 677h1v1h-1zM1006 668h1v1h-1zM1008 667h1v1h-1zM1009 674h1v1h-1zM1013 673h1v1h-1zM1017 681h1v1h-1zM1023 680h1v1h-1zM1030 689h1v1h-1zM1037 687h1v1h-1zM1043 695h1v1h-1zM1049 692h1v1h-1zM1054 698h1v1h-1zM1059 694h1v1h-1zM1062 699h1v1h-1zM1067 693h1v1h-1zM1001 678h1v1h-1zM1003 677h1v1h-1zM1003 684h1v1h-1zM1007 683h1v1h-1zM1010 692h1v1h-1zM1016 691h1v1h-1zM1022 701h1v1h-1zM1030 700h1v1h-1zM1035 708h1v1h-1zM1041 706h1v1h-1zM1045 712h1v1h-1zM1051 708h1v1h-1zM1053 713h1v1h-1zM1058 708h1v1h-1zM995 687h1v1h-1zM997 686h1v1h-1zM996 693h1v1h-1zM1000 692h1v1h-1zM1003 702h1v1h-1zM1009 702h1v1h-1zM1014 712h1v1h-1zM1021 712h1v1h-1zM1026 721h1v1h-1zM1032 718h1v1h-1zM1035 725h1v1h-1zM1041 722h1v1h-1zM1042 727h1v1h-1zM1048 722h1v1h-1zM988 695h1v1h-1zM991 694h1v1h-1zM989 702h1v1h-1zM993 701h1v1h-1zM995 711h1v1h-1zM1001 712h1v1h-1zM1005 723h1v1h-1zM1012 723h1v1h-1zM1016 732h1v1h-1zM1022 730h1v1h-1zM1024 738h1v1h-1zM1030 735h1v1h-1zM1031 740h1v1h-1zM1037 735h1v1h-1zM981 703h1v1h-1zM983 702h1v1h-1zM981 709h1v1h-1zM985 710h1v1h-1zM986 719h1v1h-1zM992 721h1v1h-1zM995 732h1v1h-1zM1002 733h1v1h-1zM1005 743h1v1h-1zM1011 742h1v1h-1zM1012 749h1v1h-1zM1018 747h1v1h-1zM1019 752h1v1h-1zM1025 748h1v1h-1zM973 710h1v1h-1zM975 710h1v1h-1zM973 717h1v1h-1zM976 717h1v1h-1zM976 727h1v1h-1zM982 729h1v1h-1zM984 741h1v1h-1zM991 743h1v1h-1zM993 753h1v1h-1zM999 753h1v1h-1zM1000 760h1v1h-1zM1006 758h1v1h-1zM1006 764h1v1h-1zM1012 761h1v1h-1zM964 717h1v1h-1zM966 716h1v1h-1zM964 723h1v1h-1zM967 724h1v1h-1zM966 734h1v1h-1zM972 737h1v1h-1zM973 749h1v1h-1zM980 752h1v1h-1zM980 762h1v1h-1zM987 762h1v1h-1zM987 770h1v1h-1zM993 769h1v1h-1zM992 775h1v1h-1zM999 772h1v1h-1zM955 723h1v1h-1zM958 723h1v1h-1zM954 729h1v1h-1zM958 730h1v1h-1zM956 741h1v1h-1zM961 744h1v1h-1zM961 757h1v1h-1zM967 760h1v1h-1zM967 771h1v1h-1zM974 771h1v1h-1zM973 779h1v1h-1zM979 778h1v1h-1zM978 784h1v1h-1zM985 782h1v1h-1zM946 728h1v1h-1zM948 728h1v1h-1zM945 735h1v1h-1zM948 736h1v1h-1zM945 747h1v1h-1zM950 750h1v1h-1zM949 763h1v1h-1zM955 767h1v1h-1zM954 778h1v1h-1zM960 779h1v1h-1zM958 787h1v1h-1zM964 787h1v1h-1zM963 793h1v1h-1zM969 791h1v1h-1zM937 733h1v1h-1zM939 734h1v1h-1zM934 740h1v1h-1zM938 742h1v1h-1zM934 752h1v1h-1zM939 756h1v1h-1zM936 770h1v1h-1zM942 773h1v1h-1zM940 785h1v1h-1zM946 786h1v1h-1zM943 794h1v1h-1zM949 794h1v1h-1zM947 800h1v1h-1zM954 799h1v1h-1zM927 738h1v1h-1zM929 738h1v1h-1zM924 744h1v1h-1zM927 746h1v1h-1zM923 757h1v1h-1zM927 761h1v1h-1zM923 774h1v1h-1zM928 779h1v1h-1zM925 790h1v1h-1zM931 792h1v1h-1zM928 801h1v1h-1zM934 801h1v1h-1zM931 807h1v1h-1zM938 806h1v1h-1zM917 742h1v1h-1zM919 742h1v1h-1zM913 748h1v1h-1zM916 750h1v1h-1zM911 760h1v1h-1zM915 765h1v1h-1zM910 778h1v1h-1zM915 783h1v1h-1zM910 794h1v1h-1zM916 797h1v1h-1zM912 805h1v1h-1zM918 806h1v1h-1zM915 812h1v1h-1zM922 812h1v1h-1z" fill="#3434c8" fill-opacity="0.75"/>
<path d="M990.4,163.6 991.9,187.6 993.3,211.6 994.8,235.7 996.2,259.7 997.7,283.7 999.1,307.7 1000.6,331.7 1002.1,355.7 1003.6,379.8 1005.1,403.8 1006.6,427.8 1008,451.8 1009.4,475.8 1010.8,499.9 1012.2,523.9 1013.5,547.9 1014.9,571.9 1016.1,596 1017.3,620 1017.8,630.7 1016.3,640.6 1013.2,650.8 1008.9,660.6 1004.2,670.2 999.1,679.6 993.5,688.7 986.7,696.9 979,704.3 970.7,711 962.2,717.5 953.5,723.6 944.3,729.1 934.8,733.9 924.9,738 915,742" fill="none" stroke="#4a4a4a" stroke-width="1.2"/>
<path d="M1190.5,173.8 1185.5,197.3 1180.4,220.8 1175.4,244.3 1170.3,267.8 1165.3,291.3 1160.3,314.8 1155.2,338.3 1150.2,361.8 1145.2,385.3 1140.2,408.8 1135.2,432.3 1130.2,455.8 1125.1,479.3 1119.9,502.8 1114.7,526.2 1109.5,549.7 1104.2,573.1 1098.9,596.6 1093.5,620 1089.2,637.1 1083.7,653.9 1078.5,670.7 1071.9,687.1 1064,703 1054.1,717.6 1043.1,731.4 1031.4,744.6 1019.1,757.3 1006.1,769.2 992,779.9 976.9,789.1 961.4,797.6 945.6,805.5 929.2,812.2 912,816" fill="none" stroke="#4a4a4a" stroke-width="1.2"/>
<ellipse cx="1090.5" cy="168.7" rx="100" ry="17.5" transform="rotate(3.3 1090.5 168.7)" fill="#6a6a6a" stroke="#555" stroke-width="1"/>
<path d="M1121.1,172.7 1102.9,174.8 1077.5,173.3 1059.6,169.2 1059.9,164.7 1078.1,162.6 1103.5,164.1 1121.4,168.2 1121.1,172.7 M1121.1,172.7 1090.5,168.7 M1102.9,174.8 1090.5,168.7 M1077.5,173.3 1090.5,168.7 M1059.6,169.2 1090.5,168.7 M1059.9,164.7 1090.5,168.7 M1078.1,162.6 1090.5,168.7 M1103.5,164.1 1090.5,168.7 M1121.4,168.2 1090.5,168.7 M1157.1,172.5 1151.7,176.7 1137.1,179.6 1115.3,180.9 1089.8,180.3 1064.4,178 1043,174.2 1028.8,169.6 1023.9,164.9 1029.3,160.7 1043.9,157.8 1065.7,156.5 1091.2,157.1 1116.6,159.4 1138,163.2 1152.2,167.8 1157.1,172.5 M1157.1,172.5 1121.1,172.7 M1157.1,172.5 1102.9,174.8 M1151.7,176.7 1121.1,172.7 M1151.7,176.7 1102.9,174.8 M1137.1,179.6 1102.9,174.8 M1137.1,179.6 1077.5,173.3 M1115.3,180.9 1102.9,174.8 M1115.3,180.9 1077.5,173.3 M1089.8,180.3 1077.5,173.3 M1089.8,180.3 1059.6,169.2 M1064.4,178 1077.5,173.3 M1064.4,178 1059.6,169.2 M1043,174.2 1059.6,169.2 M1043,174.2 1059.9,164.7 M1028.8,169.6 1059.6,169.2 M1028.8,169.6 1059.9,164.7 M1023.9,164.9 1059.9,164.7 M1023.9,164.9 1078.1,162.6 M1029.3,160.7 1059.9,164.7 M1029.3,160.7 1078.1,162.6 M1043.9,157.8 1078.1,162.6 M1043.9,157.8 1103.5,164.1 M1065.7,156.5 1078.1,162.6 M1065.7,156.5 1103.5,164.1 M1091.2,157.1 1103.5,164.1 M1091.2,157.1 1121.4,168.2 M1116.6,159.4 1103.5,164.1 M1116.6,159.4 1121.4,168.2 M1138,163.2 1121.4,168.2 M1138,163.2 1121.1,172.7 M1152.2,167.8 1121.4,168.2 M1152.2,167.8 1121.1,172.7 M1189.3,176.7 1182.3,180.7 1169.1,183.9 1150.5,186.1 1127.8,187 1102.5,186.8 1076.5,185.3 1051.4,182.6 1028.9,179.1 1010.7,174.8 997.9,170.1 991.4,165.3 991.7,160.7 998.7,156.7 1011.9,153.5 1030.5,151.3 1053.2,150.4 1078.5,150.6 1104.5,152.1 1129.6,154.8 1152.1,158.3 1170.3,162.6 1183.1,167.3 1189.6,172.1 1189.3,176.7 M1189.3,176.7 1157.1,172.5 M1189.3,176.7 1151.7,176.7 M1182.3,180.7 1157.1,172.5 M1182.3,180.7 1151.7,176.7 M1169.1,183.9 1151.7,176.7 M1169.1,183.9 1137.1,179.6 M1150.5,186.1 1137.1,179.6 M1150.5,186.1 1115.3,180.9 M1127.8,187 1137.1,179.6 M1127.8,187 1115.3,180.9 M1102.5,186.8 1115.3,180.9 M1102.5,186.8 1089.8,180.3 M1076.5,185.3 1089.8,180.3 M1076.5,185.3 1064.4,178 M1051.4,182.6 1089.8,180.3 M1051.4,182.6 1064.4,178 M1028.9,179.1 1064.4,178 M1028.9,179.1 1043,174.2 M1010.7,174.8 1043,174.2 M1010.7,174.8 1028.8,169.6 M997.9,170.1 1043,174.2 M997.9,170.1 1028.8,169.6 M991.4,165.3 1028.8,169.6 M991.4,165.3 1023.9,164.9 M991.7,160.7 1023.9,164.9 M991.7,160.7 1029.3,160.7 M998.7,156.7 1023.9,164.9 M998.7,156.7 1029.3,160.7 M1011.9,153.5 1029.3,160.7 M1011.9,153.5 1043.9,157.8 M1030.5,151.3 1029.3,160.7 M1030.5,151.3 1043.9,157.8 M1053.2,150.4 1043.9,157.8 M1053.2,150.4 1065.7,156.5 M1078.5,150.6 1065.7,156.5 M1078.5,150.6 1091.2,157.1 M1104.5,152.1 1091.2,157.1 M1104.5,152.1 1116.6,159.4 M1129.6,154.8 1091.2,157.1 M1129.6,154.8 1116.6,159.4 M1152.1,158.3 1116.6,159.4 M1152.1,158.3 1138,163.2 M1170.3,162.6 1138,163.2 M1170.3,162.6 1152.2,167.8 M1183.1,167.3 1138,163.2 M1183.1,167.3 1152.2,167.8 M1189.6,172.1 1152.2,167.8 M1189.6,172.1 1157.1,172.5" fill="none" stroke="#909090" stroke-width="0.9" stroke-opacity="0.8"/>
<path d="M747.6,470 747.3,489.9 747,509.9 746.7,529.8 746.4,549.7 746.1,569.7 745.8,589.6 745.5,609.5 745.2,629.4 744.9,649.4 744.5,669.3 744.2,689.2 743.9,709.2 743.6,729.1 743.3,749 743,769 742.7,788.9 742.4,808.8 742.1,828.7 741.8,848.7 741.5,868.6 743.6,878.2 743.9,858.2 744.2,838.1 744.5,818.1 744.9,798 745.2,778 745.5,757.9 745.8,737.9 746.1,717.8 746.5,697.8 746.8,677.7 747.1,657.7 747.4,637.6 747.7,617.6 748.1,597.5 748.4,577.5 748.7,557.4 749,537.4 749.3,517.3 749.7,497.3 750,477.2Z" fill="#4c4c4c"/>
<path d="M750,477.2 749.7,497.3 749.3,517.3 749,537.4 748.7,557.4 748.4,577.5 748.1,597.5 747.7,617.6 747.4,637.6 747.1,657.7 746.8,677.7 746.5,697.8 746.1,717.8 745.8,737.9 745.5,757.9 745.2,778 744.9,798 744.5,818.1 744.2,838.1 743.9,858.2 743.6,878.2 749.9,887.1 750.3,867 750.6,846.8 751,826.6 751.3,806.5 751.7,786.3 752,766.1 752.4,746 752.7,725.8 753.1,705.6 753.4,685.5 753.8,665.3 754.1,645.1 754.5,625 754.8,604.8 755.2,584.6 755.5,564.5 755.9,544.3 756.2,524.1 756.6,504 756.9,483.8Z" fill="#747474"/>
<path d="M756.9,483.8 756.6,504 756.2,524.1 755.9,544.3 755.5,564.5 755.2,584.6 754.8,604.8 754.5,625 754.1,645.1 753.8,665.3 753.4,685.5 753.1,705.6 752.7,725.8 752.4,746 752,766.1 751.7,786.3 751.3,806.5 751,826.6 750.6,846.8 750.3,867 749.9,887.1 760.2,895.4 760.6,875.1 761,854.8 761.4,834.5 761.8,814.3 762.2,794 762.6,773.7 763,753.4 763.4,733.2 763.8,712.9 764.2,692.6 764.6,672.3 765,652.1 765.4,631.8 765.8,611.5 766.2,591.2 766.6,571 767,550.7 767.4,530.4 767.8,510.1 768.2,489.9Z" fill="#989898"/>
<path d="M768.2,489.9 767.8,510.1 767.4,530.4 767,550.7 766.6,571 766.2,591.2 765.8,611.5 765.4,631.8 765,652.1 764.6,672.3 764.2,692.6 763.8,712.9 763.4,733.2 763,753.4 762.6,773.7 762.2,794 761.8,814.3 761.4,834.5 761,854.8 760.6,875.1 760.2,895.4 773.9,902.6 774.4,882.2 774.8,861.8 775.3,841.5 775.8,821.1 776.2,800.7 776.7,780.4 777.1,760 777.6,739.6 778.1,719.2 778.5,698.9 779,678.5 779.4,658.1 779.9,637.7 780.4,617.4 780.8,597 781.3,576.6 781.8,556.2 782.2,535.9 782.7,515.5 783.1,495.1Z" fill="#c0c0c0"/>
<path d="M783.1,495.1 782.7,515.5 782.2,535.9 781.8,556.2 781.3,576.6 780.8,597 780.4,617.4 779.9,637.7 779.4,658.1 779,678.5 778.5,698.9 778.1,719.2 777.6,739.6 777.1,760 776.7,780.4 776.2,800.7 775.8,821.1 775.3,841.5 774.8,861.8 774.4,882.2 773.9,902.6 790.5,908.4 791,888 791.5,867.5 792.1,847.1 792.6,826.6 793.1,806.2 793.7,785.7 794.2,765.3 794.7,744.8 795.3,724.3 795.8,703.9 796.3,683.4 796.9,663 797.4,642.5 797.9,622.1 798.5,601.6 799,581.2 799.5,560.7 800.1,540.2 800.6,519.8 801.1,499.3Z" fill="#cecece"/>
<path d="M801.1,499.3 800.6,519.8 800.1,540.2 799.5,560.7 799,581.2 798.5,601.6 797.9,622.1 797.4,642.5 796.9,663 796.3,683.4 795.8,703.9 795.3,724.3 794.7,744.8 794.2,765.3 793.7,785.7 793.1,806.2 792.6,826.6 792.1,847.1 791.5,867.5 791,888 790.5,908.4 809.1,912.7 809.7,892.1 810.3,871.6 810.9,851.1 811.5,830.6 812.1,810.1 812.7,789.5 813.4,769 814,748.5 814.6,728 815.2,707.5 815.8,686.9 816.4,666.4 817,645.9 817.7,625.4 818.3,604.9 818.9,584.4 819.5,563.8 820.1,543.3 820.7,522.8 821.3,502.3Z" fill="#d4d4d4"/>
<path d="M821.3,502.3 820.7,522.8 820.1,543.3 819.5,563.8 818.9,584.4 818.3,604.9 817.7,625.4 817,645.9 816.4,666.4 815.8,686.9 815.2,707.5 814.6,728 814,748.5 813.4,769 812.7,789.5 812.1,810.1 811.5,830.6 810.9,851.1 810.3,871.6 809.7,892.1 809.1,912.7 828.8,915 829.5,894.5 830.2,873.9 830.9,853.4 831.6,832.8 832.3,812.2 833,791.7 833.7,771.1 834.4,750.6 835.1,730 835.8,709.4 836.5,688.9 837.2,668.3 837.9,647.8 838.6,627.2 839.3,606.6 840,586.1 840.7,565.5 841.4,545 842.1,524.4 842.8,503.8Z" fill="#d6d6d6"/>
<path d="M842.8,503.8 842.1,524.4 841.4,545 840.7,565.5 840,586.1 839.3,606.6 838.6,627.2 837.9,647.8 837.2,668.3 836.5,688.9 835.8,709.4 835.1,730 834.4,750.6 833.7,771.1 833,791.7 832.3,812.2 831.6,832.8 830.9,853.4 830.2,873.9 829.5,894.5 828.8,915 848.9,915.5 849.7,894.9 850.4,874.3 851.2,853.7 852,833.2 852.8,812.6 853.6,792 854.4,771.4 855.1,750.9 855.9,730.3 856.7,709.7 857.5,689.1 858.3,668.5 859.1,648 859.8,627.4 860.6,606.8 861.4,586.2 862.2,565.7 863,545.1 863.8,524.5 864.5,503.9Z" fill="#d8d8d8"/>
<path d="M864.5,503.9 863.8,524.5 863,545.1 862.2,565.7 861.4,586.2 860.6,606.8 859.8,627.4 859.1,648 858.3,668.5 857.5,689.1 856.7,709.7 855.9,730.3 855.1,750.9 854.4,771.4 853.6,792 852.8,812.6 852,833.2 851.2,853.7 850.4,874.3 849.7,894.9 848.9,915.5 868.2,913.9 869.1,893.4 870,872.8 870.8,852.2 871.7,831.7 872.5,811.1 873.4,790.5 874.3,769.9 875.1,749.4 876,728.8 876.9,708.2 877.7,687.7 878.6,667.1 879.5,646.5 880.3,626 881.2,605.4 882,584.8 882.9,564.3 883.8,543.7 884.6,523.1 885.5,502.6Z" fill="#d4d4d4"/>
<path d="M885.5,502.6 884.6,523.1 883.8,543.7 882.9,564.3 882,584.8 881.2,605.4 880.3,626 879.5,646.5 878.6,667.1 877.7,687.7 876.9,708.2 876,728.8 875.1,749.4 874.3,769.9 873.4,790.5 872.5,811.1 871.7,831.7 870.8,852.2 870,872.8 869.1,893.4 868.2,913.9 886,910.5 886.9,890 887.9,869.4 888.8,848.9 889.8,828.3 890.7,807.8 891.6,787.3 892.6,766.7 893.5,746.2 894.4,725.7 895.4,705.1 896.3,684.6 897.2,664.1 898.2,643.5 899.1,623 900,602.5 901,581.9 901.9,561.4 902.9,540.9 903.8,520.3 904.7,499.8Z" fill="#cacaca"/>
<path d="M904.7,499.8 903.8,520.3 902.9,540.9 901.9,561.4 901,581.9 900,602.5 899.1,623 898.2,643.5 897.2,664.1 896.3,684.6 895.4,705.1 894.4,725.7 893.5,746.2 892.6,766.7 891.6,787.3 890.7,807.8 889.8,828.3 888.8,848.9 887.9,869.4 886.9,890 886,910.5 901.4,905.3 902.4,884.8 903.4,864.4 904.4,843.9 905.4,823.4 906.4,802.9 907.4,782.4 908.4,762 909.4,741.5 910.3,721 911.3,700.5 912.3,680.1 913.3,659.6 914.3,639.1 915.3,618.6 916.3,598.1 917.3,577.7 918.3,557.2 919.3,536.7 920.3,516.2 921.3,495.8Z" fill="#b6b6b6"/>
<path d="M921.3,495.8 920.3,516.2 919.3,536.7 918.3,557.2 917.3,577.7 916.3,598.1 915.3,618.6 914.3,639.1 913.3,659.6 912.3,680.1 911.3,700.5 910.3,721 909.4,741.5 908.4,762 907.4,782.4 906.4,802.9 905.4,823.4 904.4,843.9 903.4,864.4 902.4,884.8 901.4,905.3 913.6,898.7 914.7,878.3 915.7,857.9 916.7,837.5 917.8,817 918.8,796.6 919.9,776.2 920.9,755.8 922,735.4 923,715 924.1,694.6 925.1,674.2 926.2,653.8 927.2,633.4 928.2,613 929.3,592.6 930.3,572.2 931.4,551.8 932.4,531.4 933.5,511 934.5,490.6Z" fill="#9e9e9e"/>
<path d="M934.5,490.6 933.5,511 932.4,531.4 931.4,551.8 930.3,572.2 929.3,592.6 928.2,613 927.2,633.4 926.2,653.8 925.1,674.2 924.1,694.6 923,715 922,735.4 920.9,755.8 919.9,776.2 918.8,796.6 917.8,817 916.7,837.5 915.7,857.9 914.7,878.3 913.6,898.7 922.2,890.8 923.2,870.5 924.3,850.2 925.4,829.9 926.5,809.6 927.5,789.3 928.6,769 929.7,748.7 930.8,728.3 931.8,708 932.9,687.7 934,667.4 935.1,647.1 936.1,626.8 937.2,606.5 938.3,586.2 939.4,565.9 940.4,545.6 941.5,525.3 942.6,505 943.7,484.7Z" fill="#8a8a8a"/>
<path d="M943.7,484.7 942.6,505 941.5,525.3 940.4,545.6 939.4,565.9 938.3,586.2 937.2,606.5 936.1,626.8 935.1,647.1 934,667.4 932.9,687.7 931.8,708 930.8,728.3 929.7,748.7 928.6,769 927.5,789.3 926.5,809.6 925.4,829.9 924.3,850.2 923.2,870.5 922.2,890.8 927.2,878 928.3,857.8 929.4,837.7 930.5,817.6 931.6,797.4 932.7,777.2 933.7,757.1 934.8,737 935.9,716.8 937,696.7 938.1,676.5 939.2,656.4 940.3,636.2 941.4,616 942.5,595.9 943.5,575.8 944.6,555.6 945.7,535.5 946.8,515.3 947.9,495.1 949,475Z" fill="#484848"/>
<path d="M747.6,470 750,477.2 756.9,483.8 768.2,489.9 783.1,495.1 801.1,499.3 821.3,502.3 842.8,503.8 864.5,503.9 885.5,502.6 904.7,499.8 921.3,495.8 934.5,490.6 943.7,484.7 949,475 M747.3,489.9 749.7,497.3 756.6,504 767.8,510.1 782.7,515.5 800.6,519.8 820.7,522.8 842.1,524.4 863.8,524.5 884.6,523.1 903.8,520.3 920.3,516.2 933.5,511 942.6,505 947.9,495.1 M747,509.9 749.3,517.3 756.2,524.1 767.4,530.4 782.2,535.9 800.1,540.2 820.1,543.3 841.4,545 863,545.1 883.8,543.7 902.9,540.9 919.3,536.7 932.4,531.4 941.5,525.3 946.8,515.3 M746.7,529.8 749,537.4 755.9,544.3 767,550.7 781.8,556.2 799.5,560.7 819.5,563.8 840.7,565.5 862.2,565.7 882.9,564.3 901.9,561.4 918.3,557.2 931.4,551.8 940.4,545.6 945.7,535.5 M746.4,549.7 748.7,557.4 755.5,564.5 766.6,571 781.3,576.6 799,581.2 818.9,584.4 840,586.1 861.4,586.2 882,584.8 901,581.9 917.3,577.7 930.3,572.2 939.4,565.9 944.6,555.6 M746.1,569.7 748.4,577.5 755.2,584.6 766.2,591.2 780.8,597 798.5,601.6 818.3,604.9 839.3,606.6 860.6,606.8 881.2,605.4 900,602.5 916.3,598.1 929.3,592.6 938.3,586.2 943.5,575.8 M745.8,589.6 748.1,597.5 754.8,604.8 765.8,611.5 780.4,617.4 797.9,622.1 817.7,625.4 838.6,627.2 859.8,627.4 880.3,626 899.1,623 915.3,618.6 928.2,613 937.2,606.5 942.5,595.9 M745.5,609.5 747.7,617.6 754.5,625 765.4,631.8 779.9,637.7 797.4,642.5 817,645.9 837.9,647.8 859.1,648 879.5,646.5 898.2,643.5 914.3,639.1 927.2,633.4 936.1,626.8 941.4,616 M745.2,629.4 747.4,637.6 754.1,645.1 765,652.1 779.4,658.1 796.9,663 816.4,666.4 837.2,668.3 858.3,668.5 878.6,667.1 897.2,664.1 913.3,659.6 926.2,653.8 935.1,647.1 940.3,636.2 M744.9,649.4 747.1,657.7 753.8,665.3 764.6,672.3 779,678.5 796.3,683.4 815.8,686.9 836.5,688.9 857.5,689.1 877.7,687.7 896.3,684.6 912.3,680.1 925.1,674.2 934,667.4 939.2,656.4 M744.5,669.3 746.8,677.7 753.4,685.5 764.2,692.6 778.5,698.9 795.8,703.9 815.2,707.5 835.8,709.4 856.7,709.7 876.9,708.2 895.4,705.1 911.3,700.5 924.1,694.6 932.9,687.7 938.1,676.5 M744.2,689.2 746.5,697.8 753.1,705.6 763.8,712.9 778.1,719.2 795.3,724.3 814.6,728 835.1,730 855.9,730.3 876,728.8 894.4,725.7 910.3,721 923,715 931.8,708 937,696.7 M743.9,709.2 746.1,717.8 752.7,725.8 763.4,733.2 777.6,739.6 794.7,744.8 814,748.5 834.4,750.6 855.1,750.9 875.1,749.4 893.5,746.2 909.4,741.5 922,735.4 930.8,728.3 935.9,716.8 M743.6,729.1 745.8,737.9 752.4,746 763,753.4 777.1,760 794.2,765.3 813.4,769 833.7,771.1 854.4,771.4 874.3,769.9 892.6,766.7 908.4,762 920.9,755.8 929.7,748.7 934.8,737 M743.3,749 745.5,757.9 752,766.1 762.6,773.7 776.7,780.4 793.7,785.7 812.7,789.5 833,791.7 853.6,792 873.4,790.5 891.6,787.3 907.4,782.4 919.9,776.2 928.6,769 933.7,757.1 M743,769 745.2,778 751.7,786.3 762.2,794 776.2,800.7 793.1,806.2 812.1,810.1 832.3,812.2 852.8,812.6 872.5,811.1 890.7,807.8 906.4,802.9 918.8,796.6 927.5,789.3 932.7,777.2 M742.7,788.9 744.9,798 751.3,806.5 761.8,814.3 775.8,821.1 792.6,826.6 811.5,830.6 831.6,832.8 852,833.2 871.7,831.7 889.8,828.3 905.4,823.4 917.8,817 926.5,809.6 931.6,797.4 M742.4,808.8 744.5,818.1 751,826.6 761.4,834.5 775.3,841.5 792.1,847.1 810.9,851.1 830.9,853.4 851.2,853.7 870.8,852.2 888.8,848.9 904.4,843.9 916.7,837.5 925.4,829.9 930.5,817.6 M742.1,828.7 744.2,838.1 750.6,846.8 761,854.8 774.8,861.8 791.5,867.5 810.3,871.6 830.2,873.9 850.4,874.3 870,872.8 887.9,869.4 903.4,864.4 915.7,857.9 924.3,850.2 929.4,837.7 M741.8,848.7 743.9,858.2 750.3,867 760.6,875.1 774.4,882.2 791,888 809.7,892.1 829.5,894.5 849.7,894.9 869.1,893.4 886.9,890 902.4,884.8 914.7,878.3 923.2,870.5 928.3,857.8 M741.5,868.6 743.6,878.2 749.9,887.1 760.2,895.4 773.9,902.6 790.5,908.4 809.1,912.7 828.8,915 848.9,915.5 868.2,913.9 886,910.5 901.4,905.3 913.6,898.7 922.2,890.8 927.2,878 M750,477.2 749.7,497.3 749.3,517.3 749,537.4 748.7,557.4 748.4,577.5 748.1,597.5 747.7,617.6 747.4,637.6 747.1,657.7 746.8,677.7 746.5,697.8 746.1,717.8 745.8,737.9 745.5,757.9 745.2,778 744.9,798 744.5,818.1 744.2,838.1 743.9,858.2 743.6,878.2 M756.9,483.8 756.6,504 756.2,524.1 755.9,544.3 755.5,564.5 755.2,584.6 754.8,604.8 754.5,625 754.1,645.1 753.8,665.3 753.4,685.5 753.1,705.6 752.7,725.8 752.4,746 752,766.1 751.7,786.3 751.3,806.5 751,826.6 750.6,846.8 750.3,867 749.9,887.1 M768.2,489.9 767.8,510.1 767.4,530.4 767,550.7 766.6,571 766.2,591.2 765.8,611.5 765.4,631.8 765,652.1 764.6,672.3 764.2,692.6 763.8,712.9 763.4,733.2 763,753.4 762.6,773.7 762.2,794 761.8,814.3 761.4,834.5 761,854.8 760.6,875.1 760.2,895.4 M783.1,495.1 782.7,515.5 782.2,535.9 781.8,556.2 781.3,576.6 780.8,597 780.4,617.4 779.9,637.7 779.4,658.1 779,678.5 778.5,698.9 778.1,719.2 777.6,739.6 777.1,760 776.7,780.4 776.2,800.7 775.8,821.1 775.3,841.5 774.8,861.8 774.4,882.2 773.9,902.6 M801.1,499.3 800.6,519.8 800.1,540.2 799.5,560.7 799,581.2 798.5,601.6 797.9,622.1 797.4,642.5 796.9,663 796.3,683.4 795.8,703.9 795.3,724.3 794.7,744.8 794.2,765.3 793.7,785.7 793.1,806.2 792.6,826.6 792.1,847.1 791.5,867.5 791,888 790.5,908.4 M821.3,502.3 820.7,522.8 820.1,543.3 819.5,563.8 818.9,584.4 818.3,604.9 817.7,625.4 817,645.9 816.4,666.4 815.8,686.9 815.2,707.5 814.6,728 814,748.5 813.4,769 812.7,789.5 812.1,810.1 811.5,830.6 810.9,851.1 810.3,871.6 809.7,892.1 809.1,912.7 M842.8,503.8 842.1,524.4 841.4,545 840.7,565.5 840,586.1 839.3,606.6 838.6,627.2 837.9,647.8 837.2,668.3 836.5,688.9 835.8,709.4 835.1,730 834.4,750.6 833.7,771.1 833,791.7 832.3,812.2 831.6,832.8 830.9,853.4 830.2,873.9 829.5,894.5 828.8,915 M864.5,503.9 863.8,524.5 863,545.1 862.2,565.7 861.4,586.2 860.6,606.8 859.8,627.4 859.1,648 858.3,668.5 857.5,689.1 856.7,709.7 855.9,730.3 855.1,750.9 854.4,771.4 853.6,792 852.8,812.6 852,833.2 851.2,853.7 850.4,874.3 849.7,894.9 848.9,915.5 M885.5,502.6 884.6,523.1 883.8,543.7 882.9,564.3 882,584.8 881.2,605.4 880.3,626 879.5,646.5 878.6,667.1 877.7,687.7 876.9,708.2 876,728.8 875.1,749.4 874.3,769.9 873.4,790.5 872.5,811.1 871.7,831.7 870.8,852.2 870,872.8 869.1,893.4 868.2,913.9 M904.7,499.8 903.8,520.3 902.9,540.9 901.9,561.4 901,581.9 900,602.5 899.1,623 898.2,643.5 897.2,664.1 896.3,684.6 895.4,705.1 894.4,725.7 893.5,746.2 892.6,766.7 891.6,787.3 890.7,807.8 889.8,828.3 888.8,848.9 887.9,869.4 886.9,890 886,910.5 M921.3,495.8 920.3,516.2 919.3,536.7 918.3,557.2 917.3,577.7 916.3,598.1 915.3,618.6 914.3,639.1 913.3,659.6 912.3,680.1 911.3,700.5 910.3,721 909.4,741.5 908.4,762 907.4,782.4 906.4,802.9 905.4,823.4 904.4,843.9 903.4,864.4 902.4,884.8 901.4,905.3 M934.5,490.6 933.5,511 932.4,531.4 931.4,551.8 930.3,572.2 929.3,592.6 928.2,613 927.2,633.4 926.2,653.8 925.1,674.2 924.1,694.6 923,715 922,735.4 920.9,755.8 919.9,776.2 918.8,796.6 917.8,817 916.7,837.5 915.7,857.9 914.7,878.3 913.6,898.7 M943.7,484.7 942.6,505 941.5,525.3 940.4,545.6 939.4,565.9 938.3,586.2 937.2,606.5 936.1,626.8 935.1,647.1 934,667.4 932.9,687.7 931.8,708 930.8,728.3 929.7,748.7 928.6,769 927.5,789.3 926.5,809.6 925.4,829.9 924.3,850.2 923.2,870.5 922.2,890.8 M747.3,489.9 750,477.2 M749.7,497.3 756.9,483.8 M756.6,504 768.2,489.9 M767.8,510.1 783.1,495.1 M782.7,515.5 801.1,499.3 M800.6,519.8 821.3,502.3 M820.7,522.8 842.8,503.8 M842.1,524.4 864.5,503.9 M863.8,524.5 885.5,502.6 M884.6,523.1 904.7,499.8 M903.8,520.3 921.3,495.8 M920.3,516.2 934.5,490.6 M933.5,511 943.7,484.7 M942.6,505 949,475 M747,509.9 749.7,497.3 M749.3,517.3 756.6,504 M756.2,524.1 767.8,510.1 M767.4,530.4 782.7,515.5 M782.2,535.9 800.6,519.8 M800.1,540.2 820.7,522.8 M820.1,543.3 842.1,524.4 M841.4,545 863.8,524.5 M863,545.1 884.6,523.1 M883.8,543.7 903.8,520.3 M902.9,540.9 920.3,516.2 M919.3,536.7 933.5,511 M932.4,531.4 942.6,505 M941.5,525.3 947.9,495.1 M746.7,529.8 749.3,517.3 M749,537.4 756.2,524.1 M755.9,544.3 767.4,530.4 M767,550.7 782.2,535.9 M781.8,556.2 800.1,540.2 M799.5,560.7 820.1,543.3 M819.5,563.8 841.4,545 M840.7,565.5 863,545.1 M862.2,565.7 883.8,543.7 M882.9,564.3 902.9,540.9 M901.9,561.4 919.3,536.7 M918.3,557.2 932.4,531.4 M931.4,551.8 941.5,525.3 M940.4,545.6 946.8,515.3 M746.4,549.7 749,537.4 M748.7,557.4 755.9,544.3 M755.5,564.5 767,550.7 M766.6,571 781.8,556.2 M781.3,576.6 799.5,560.7 M799,581.2 819.5,563.8 M818.9,584.4 840.7,565.5 M840,586.1 862.2,565.7 M861.4,586.2 882.9,564.3 M882,584.8 901.9,561.4 M901,581.9 918.3,557.2 M917.3,577.7 931.4,551.8 M930.3,572.2 940.4,545.6 M939.4,565.9 945.7,535.5 M746.1,569.7 748.7,557.4 M748.4,577.5 755.5,564.5 M755.2,584.6 766.6,571 M766.2,591.2 781.3,576.6 M780.8,597 799,581.2 M798.5,601.6 818.9,584.4 M818.3,604.9 840,586.1 M839.3,606.6 861.4,586.2 M860.6,606.8 882,584.8 M881.2,605.4 901,581.9 M900,602.5 917.3,577.7 M916.3,598.1 930.3,572.2 M929.3,592.6 939.4,565.9 M938.3,586.2 944.6,555.6 M745.8,589.6 748.4,577.5 M748.1,597.5 755.2,584.6 M754.8,604.8 766.2,591.2 M765.8,611.5 780.8,597 M780.4,617.4 798.5,601.6 M797.9,622.1 818.3,604.9 M817.7,625.4 839.3,606.6 M838.6,627.2 860.6,606.8 M859.8,627.4 881.2,605.4 M880.3,626 900,602.5 M899.1,623 916.3,598.1 M915.3,618.6 929.3,592.6 M928.2,613 938.3,586.2 M937.2,606.5 943.5,575.8 M745.5,609.5 748.1,597.5 M747.7,617.6 754.8,604.8 M754.5,625 765.8,611.5 M765.4,631.8 780.4,617.4 M779.9,637.7 797.9,622.1 M797.4,642.5 817.7,625.4 M817,645.9 838.6,627.2 M837.9,647.8 859.8,627.4 M859.1,648 880.3,626 M879.5,646.5 899.1,623 M898.2,643.5 915.3,618.6 M914.3,639.1 928.2,613 M927.2,633.4 937.2,606.5 M936.1,626.8 942.5,595.9 M745.2,629.4 747.7,617.6 M747.4,637.6 754.5,625 M754.1,645.1 765.4,631.8 M765,652.1 779.9,637.7 M779.4,658.1 797.4,642.5 M796.9,663 817,645.9 M816.4,666.4 837.9,647.8 M837.2,668.3 859.1,648 M858.3,668.5 879.5,646.5 M878.6,667.1 898.2,643.5 M897.2,664.1 914.3,639.1 M913.3,659.6 927.2,633.4 M926.2,653.8 936.1,626.8 M935.1,647.1 941.4,616 M744.9,649.4 747.4,637.6 M747.1,657.7 754.1,645.1 M753.8,665.3 765,652.1 M764.6,672.3 779.4,658.1 M779,678.5 796.9,663 M796.3,683.4 816.4,666.4 M815.8,686.9 837.2,668.3 M836.5,688.9 858.3,668.5 M857.5,689.1 878.6,667.1 M877.7,687.7 897.2,664.1 M896.3,684.6 913.3,659.6 M912.3,680.1 926.2,653.8 M925.1,674.2 935.1,647.1 M934,667.4 940.3,636.2 M744.5,669.3 747.1,657.7 M746.8,677.7 753.8,665.3 M753.4,685.5 764.6,672.3 M764.2,692.6 779,678.5 M778.5,698.9 796.3,683.4 M795.8,703.9 815.8,686.9 M815.2,707.5 836.5,688.9 M835.8,709.4 857.5,689.1 M856.7,709.7 877.7,687.7 M876.9,708.2 896.3,684.6 M895.4,705.1 912.3,680.1 M911.3,700.5 925.1,674.2 M924.1,694.6 934,667.4 M932.9,687.7 939.2,656.4 M744.2,689.2 746.8,677.7 M746.5,697.8 753.4,685.5 M753.1,705.6 764.2,692.6 M763.8,712.9 778.5,698.9 M778.1,719.2 795.8,703.9 M795.3,724.3 815.2,707.5 M814.6,728 835.8,709.4 M835.1,730 856.7,709.7 M855.9,730.3 876.9,708.2 M876,728.8 895.4,705.1 M894.4,725.7 911.3,700.5 M910.3,721 924.1,694.6 M923,715 932.9,687.7 M931.8,708 938.1,676.5 M743.9,709.2 746.5,697.8 M746.1,717.8 753.1,705.6 M752.7,725.8 763.8,712.9 M763.4,733.2 778.1,719.2 M777.6,739.6 795.3,724.3 M794.7,744.8 814.6,728 M814,748.5 835.1,730 M834.4,750.6 855.9,730.3 M855.1,750.9 876,728.8 M875.1,749.4 894.4,725.7 M893.5,746.2 910.3,721 M909.4,741.5 923,715 M922,735.4 931.8,708 M930.8,728.3 937,696.7 M743.6,729.1 746.1,717.8 M745.8,737.9 752.7,725.8 M752.4,746 763.4,733.2 M763,753.4 777.6,739.6 M777.1,760 794.7,744.8 M794.2,765.3 814,748.5 M813.4,769 834.4,750.6 M833.7,771.1 855.1,750.9 M854.4,771.4 875.1,749.4 M874.3,769.9 893.5,746.2 M892.6,766.7 909.4,741.5 M908.4,762 922,735.4 M920.9,755.8 930.8,728.3 M929.7,748.7 935.9,716.8 M743.3,749 745.8,737.9 M745.5,757.9 752.4,746 M752,766.1 763,753.4 M762.6,773.7 777.1,760 M776.7,780.4 794.2,765.3 M793.7,785.7 813.4,769 M812.7,789.5 833.7,771.1 M833,791.7 854.4,771.4 M853.6,792 874.3,769.9 M873.4,790.5 892.6,766.7 M891.6,787.3 908.4,762 M907.4,782.4 920.9,755.8 M919.9,776.2 929.7,748.7 M928.6,769 934.8,737 M743,769 745.5,757.9 M745.2,778 752,766.1 M751.7,786.3 762.6,773.7 M762.2,794 776.7,780.4 M776.2,800.7 793.7,785.7 M793.1,806.2 812.7,789.5 M812.1,810.1 833,791.7 M832.3,812.2 853.6,792 M852.8,812.6 873.4,790.5 M872.5,811.1 891.6,787.3 M890.7,807.8 907.4,782.4 M906.4,802.9 919.9,776.2 M918.8,796.6 928.6,769 M927.5,789.3 933.7,757.1 M742.7,788.9 745.2,778 M744.9,798 751.7,786.3 M751.3,806.5 762.2,794 M761.8,814.3 776.2,800.7 M775.8,821.1 793.1,806.2 M792.6,826.6 812.1,810.1 M811.5,830.6 832.3,812.2 M831.6,832.8 852.8,812.6 M852,833.2 872.5,811.1 M871.7,831.7 890.7,807.8 M889.8,828.3 906.4,802.9 M905.4,823.4 918.8,796.6 M917.8,817 927.5,789.3 M926.5,809.6 932.7,777.2 M742.4,808.8 744.9,798 M744.5,818.1 751.3,806.5 M751,826.6 761.8,814.3 M761.4,834.5 775.8,821.1 M775.3,841.5 792.6,826.6 M792.1,847.1 811.5,830.6 M810.9,851.1 831.6,832.8 M830.9,853.4 852,833.2 M851.2,853.7 871.7,831.7 M870.8,852.2 889.8,828.3 M888.8,848.9 905.4,823.4 M904.4,843.9 917.8,817 M916.7,837.5 926.5,809.6 M925.4,829.9 931.6,797.4 M742.1,828.7 744.5,818.1 M744.2,838.1 751,826.6 M750.6,846.8 761.4,834.5 M761,854.8 775.3,841.5 M774.8,861.8 792.1,847.1 M791.5,867.5 810.9,851.1 M810.3,871.6 830.9,853.4 M830.2,873.9 851.2,853.7 M850.4,874.3 870.8,852.2 M870,872.8 888.8,848.9 M887.9,869.4 904.4,843.9 M903.4,864.4 916.7,837.5 M915.7,857.9 925.4,829.9 M924.3,850.2 930.5,817.6 M741.8,848.7 744.2,838.1 M743.9,858.2 750.6,846.8 M750.3,867 761,854.8 M760.6,875.1 774.8,861.8 M774.4,882.2 791.5,867.5 M791,888 810.3,871.6 M809.7,892.1 830.2,873.9 M829.5,894.5 850.4,874.3 M849.7,894.9 870,872.8 M869.1,893.4 887.9,869.4 M886.9,890 903.4,864.4 M902.4,884.8 915.7,857.9 M914.7,878.3 924.3,850.2 M923.2,870.5 929.4,837.7 M741.5,868.6 743.9,858.2 M743.6,878.2 750.3,867 M749.9,887.1 760.6,875.1 M760.2,895.4 774.4,882.2 M773.9,902.6 791,888 M790.5,908.4 809.7,892.1 M809.1,912.7 829.5,894.5 M828.8,915 849.7,894.9 M848.9,915.5 869.1,893.4 M868.2,913.9 886.9,890 M886,910.5 902.4,884.8 M901.4,905.3 914.7,878.3 M913.6,898.7 923.2,870.5 M922.2,890.8 928.3,857.8" fill="none" stroke="#6a6a6a" stroke-width="1.15" stroke-opacity="0.9"/>
<path d="M748 479h1v1h-1zM748 488h1v1h-1zM752 486h1v1h-1zM754 495h1v1h-1zM760 492h1v1h-1zM764 501h1v1h-1zM773 498h1v1h-1zM777 506h1v1h-1zM788 503h1v1h-1zM794 511h1v1h-1zM807 507h1v1h-1zM814 514h1v1h-1zM828 509h1v1h-1zM835 517h1v1h-1zM849 510h1v1h-1zM856 517h1v1h-1zM871 510h1v1h-1zM877 516h1v1h-1zM891 508h1v1h-1zM897 514h1v1h-1zM909 505h1v1h-1zM915 510h1v1h-1zM925 500h1v1h-1zM929 505h1v1h-1zM937 495h1v1h-1zM939 500h1v1h-1zM945 488h1v1h-1zM946 491h1v1h-1zM747 499h1v1h-1zM748 508h1v1h-1zM751 506h1v1h-1zM754 515h1v1h-1zM760 512h1v1h-1zM763 521h1v1h-1zM772 518h1v1h-1zM777 527h1v1h-1zM788 523h1v1h-1zM794 531h1v1h-1zM807 527h1v1h-1zM813 535h1v1h-1zM827 530h1v1h-1zM834 537h1v1h-1zM849 531h1v1h-1zM856 538h1v1h-1zM870 530h1v1h-1zM877 537h1v1h-1zM890 529h1v1h-1zM896 534h1v1h-1zM908 525h1v1h-1zM914 531h1v1h-1zM924 521h1v1h-1zM928 526h1v1h-1zM936 515h1v1h-1zM938 520h1v1h-1zM944 508h1v1h-1zM945 511h1v1h-1zM747 518h1v1h-1zM748 528h1v1h-1zM751 526h1v1h-1zM753 535h1v1h-1zM759 532h1v1h-1zM763 541h1v1h-1zM772 538h1v1h-1zM776 547h1v1h-1zM788 544h1v1h-1zM793 552h1v1h-1zM806 548h1v1h-1zM813 555h1v1h-1zM827 550h1v1h-1zM833 558h1v1h-1zM848 551h1v1h-1zM855 558h1v1h-1zM869 551h1v1h-1zM876 557h1v1h-1zM889 549h1v1h-1zM895 555h1v1h-1zM908 546h1v1h-1zM913 551h1v1h-1zM923 541h1v1h-1zM927 546h1v1h-1zM935 536h1v1h-1zM937 540h1v1h-1zM942 528h1v1h-1zM944 532h1v1h-1zM747 538h1v1h-1zM748 548h1v1h-1zM751 546h1v1h-1zM753 555h1v1h-1zM759 553h1v1h-1zM763 562h1v1h-1zM771 559h1v1h-1zM776 567h1v1h-1zM787 564h1v1h-1zM793 572h1v1h-1zM806 568h1v1h-1zM812 576h1v1h-1zM826 571h1v1h-1zM833 578h1v1h-1zM847 572h1v1h-1zM854 579h1v1h-1zM868 572h1v1h-1zM875 578h1v1h-1zM888 570h1v1h-1zM894 576h1v1h-1zM907 566h1v1h-1zM912 572h1v1h-1zM922 562h1v1h-1zM926 567h1v1h-1zM934 556h1v1h-1zM936 561h1v1h-1zM941 548h1v1h-1zM943 552h1v1h-1zM747 558h1v1h-1zM747 568h1v1h-1zM750 566h1v1h-1zM753 575h1v1h-1zM759 573h1v1h-1zM762 582h1v1h-1zM771 579h1v1h-1zM776 588h1v1h-1zM787 584h1v1h-1zM792 593h1v1h-1zM805 589h1v1h-1zM811 596h1v1h-1zM825 591h1v1h-1zM832 599h1v1h-1zM846 592h1v1h-1zM853 599h1v1h-1zM868 592h1v1h-1zM874 599h1v1h-1zM888 590h1v1h-1zM894 596h1v1h-1zM906 587h1v1h-1zM911 592h1v1h-1zM921 582h1v1h-1zM925 587h1v1h-1zM932 576h1v1h-1zM935 581h1v1h-1zM940 569h1v1h-1zM942 572h1v1h-1zM746 578h1v1h-1zM747 588h1v1h-1zM750 586h1v1h-1zM752 595h1v1h-1zM758 593h1v1h-1zM762 602h1v1h-1zM770 599h1v1h-1zM775 608h1v1h-1zM786 605h1v1h-1zM792 613h1v1h-1zM804 609h1v1h-1zM811 617h1v1h-1zM825 612h1v1h-1zM831 619h1v1h-1zM846 613h1v1h-1zM853 620h1v1h-1zM867 613h1v1h-1zM873 619h1v1h-1zM887 611h1v1h-1zM893 617h1v1h-1zM905 607h1v1h-1zM910 613h1v1h-1zM920 603h1v1h-1zM924 608h1v1h-1zM931 597h1v1h-1zM934 601h1v1h-1zM939 589h1v1h-1zM941 592h1v1h-1zM746 598h1v1h-1zM747 608h1v1h-1zM750 606h1v1h-1zM752 615h1v1h-1zM758 613h1v1h-1zM761 622h1v1h-1zM770 620h1v1h-1zM775 628h1v1h-1zM786 625h1v1h-1zM791 634h1v1h-1zM804 629h1v1h-1zM810 637h1v1h-1zM824 632h1v1h-1zM831 640h1v1h-1zM845 634h1v1h-1zM852 641h1v1h-1zM866 633h1v1h-1zM872 640h1v1h-1zM886 631h1v1h-1zM892 637h1v1h-1zM904 628h1v1h-1zM909 633h1v1h-1zM919 623h1v1h-1zM923 628h1v1h-1zM930 617h1v1h-1zM933 622h1v1h-1zM938 609h1v1h-1zM939 612h1v1h-1zM746 618h1v1h-1zM746 628h1v1h-1zM749 626h1v1h-1zM752 635h1v1h-1zM757 633h1v1h-1zM761 642h1v1h-1zM770 640h1v1h-1zM774 649h1v1h-1zM785 646h1v1h-1zM791 654h1v1h-1zM803 650h1v1h-1zM810 658h1v1h-1zM823 653h1v1h-1zM830 660h1v1h-1zM844 654h1v1h-1zM851 661h1v1h-1zM865 654h1v1h-1zM872 660h1v1h-1zM885 652h1v1h-1zM891 658h1v1h-1zM903 648h1v1h-1zM908 654h1v1h-1zM918 644h1v1h-1zM922 648h1v1h-1zM929 638h1v1h-1zM932 642h1v1h-1zM937 629h1v1h-1zM938 633h1v1h-1zM745 638h1v1h-1zM746 648h1v1h-1zM749 646h1v1h-1zM751 656h1v1h-1zM757 654h1v1h-1zM761 663h1v1h-1zM769 660h1v1h-1zM774 669h1v1h-1zM785 666h1v1h-1zM790 674h1v1h-1zM803 670h1v1h-1zM809 678h1v1h-1zM823 673h1v1h-1zM829 681h1v1h-1zM844 675h1v1h-1zM850 682h1v1h-1zM864 674h1v1h-1zM871 681h1v1h-1zM884 672h1v1h-1zM890 678h1v1h-1zM902 669h1v1h-1zM907 674h1v1h-1zM917 664h1v1h-1zM921 669h1v1h-1zM928 658h1v1h-1zM931 662h1v1h-1zM936 650h1v1h-1zM937 653h1v1h-1zM745 658h1v1h-1zM746 668h1v1h-1zM749 666h1v1h-1zM751 676h1v1h-1zM757 674h1v1h-1zM760 683h1v1h-1zM769 681h1v1h-1zM773 689h1v1h-1zM784 686h1v1h-1zM790 695h1v1h-1zM802 691h1v1h-1zM808 699h1v1h-1zM822 694h1v1h-1zM829 701h1v1h-1zM843 695h1v1h-1zM850 702h1v1h-1zM863 695h1v1h-1zM870 701h1v1h-1zM883 693h1v1h-1zM889 699h1v1h-1zM901 689h1v1h-1zM906 695h1v1h-1zM916 684h1v1h-1zM920 689h1v1h-1zM927 678h1v1h-1zM930 683h1v1h-1zM935 670h1v1h-1zM936 673h1v1h-1zM745 678h1v1h-1zM745 688h1v1h-1zM748 686h1v1h-1zM750 696h1v1h-1zM756 694h1v1h-1zM760 703h1v1h-1zM768 701h1v1h-1zM773 710h1v1h-1zM784 707h1v1h-1zM789 715h1v1h-1zM802 711h1v1h-1zM808 719h1v1h-1zM821 714h1v1h-1zM828 722h1v1h-1zM842 716h1v1h-1zM849 723h1v1h-1zM863 716h1v1h-1zM869 722h1v1h-1zM882 714h1v1h-1zM888 719h1v1h-1zM900 710h1v1h-1zM905 715h1v1h-1zM915 705h1v1h-1zM919 710h1v1h-1zM926 699h1v1h-1zM929 703h1v1h-1zM934 690h1v1h-1zM935 693h1v1h-1zM744 698h1v1h-1zM745 708h1v1h-1zM748 707h1v1h-1zM750 716h1v1h-1zM756 714h1v1h-1zM759 723h1v1h-1zM768 721h1v1h-1zM773 730h1v1h-1zM783 727h1v1h-1zM789 736h1v1h-1zM801 732h1v1h-1zM807 740h1v1h-1zM821 735h1v1h-1zM827 743h1v1h-1zM841 736h1v1h-1zM848 743h1v1h-1zM862 736h1v1h-1zM868 743h1v1h-1zM881 734h1v1h-1zM887 740h1v1h-1zM899 730h1v1h-1zM904 736h1v1h-1zM914 725h1v1h-1zM918 730h1v1h-1zM925 719h1v1h-1zM928 723h1v1h-1zM933 711h1v1h-1zM934 713h1v1h-1zM744 718h1v1h-1zM745 728h1v1h-1zM748 727h1v1h-1zM750 736h1v1h-1zM756 734h1v1h-1zM759 744h1v1h-1zM767 742h1v1h-1zM772 751h1v1h-1zM783 748h1v1h-1zM788 756h1v1h-1zM800 752h1v1h-1zM807 760h1v1h-1zM820 756h1v1h-1zM827 763h1v1h-1zM841 757h1v1h-1zM847 764h1v1h-1zM861 757h1v1h-1zM867 763h1v1h-1zM880 755h1v1h-1zM886 760h1v1h-1zM898 751h1v1h-1zM903 756h1v1h-1zM913 746h1v1h-1zM917 751h1v1h-1zM924 739h1v1h-1zM927 744h1v1h-1zM932 731h1v1h-1zM933 734h1v1h-1zM744 738h1v1h-1zM744 748h1v1h-1zM747 747h1v1h-1zM749 756h1v1h-1zM755 755h1v1h-1zM759 764h1v1h-1zM767 762h1v1h-1zM772 771h1v1h-1zM782 768h1v1h-1zM788 777h1v1h-1zM800 773h1v1h-1zM806 781h1v1h-1zM819 776h1v1h-1zM826 784h1v1h-1zM840 778h1v1h-1zM846 785h1v1h-1zM860 777h1v1h-1zM867 784h1v1h-1zM880 775h1v1h-1zM885 781h1v1h-1zM897 771h1v1h-1zM902 777h1v1h-1zM912 766h1v1h-1zM916 771h1v1h-1zM923 760h1v1h-1zM926 764h1v1h-1zM931 751h1v1h-1zM932 754h1v1h-1zM743 758h1v1h-1zM744 768h1v1h-1zM747 767h1v1h-1zM749 776h1v1h-1zM755 775h1v1h-1zM758 784h1v1h-1zM767 782h1v1h-1zM771 791h1v1h-1zM782 788h1v1h-1zM787 797h1v1h-1zM799 793h1v1h-1zM806 801h1v1h-1zM819 797h1v1h-1zM825 804h1v1h-1zM839 798h1v1h-1zM846 805h1v1h-1zM859 798h1v1h-1zM866 804h1v1h-1zM879 796h1v1h-1zM884 802h1v1h-1zM896 792h1v1h-1zM901 797h1v1h-1zM911 787h1v1h-1zM915 791h1v1h-1zM922 780h1v1h-1zM924 784h1v1h-1zM929 771h1v1h-1zM931 774h1v1h-1zM743 778h1v1h-1zM744 788h1v1h-1zM747 787h1v1h-1zM749 796h1v1h-1zM755 795h1v1h-1zM758 804h1v1h-1zM766 802h1v1h-1zM771 812h1v1h-1zM781 809h1v1h-1zM787 817h1v1h-1zM799 814h1v1h-1zM805 822h1v1h-1zM818 817h1v1h-1zM825 825h1v1h-1zM838 819h1v1h-1zM845 826h1v1h-1zM859 818h1v1h-1zM865 825h1v1h-1zM878 816h1v1h-1zM884 822h1v1h-1zM895 813h1v1h-1zM900 818h1v1h-1zM910 807h1v1h-1zM913 812h1v1h-1zM921 800h1v1h-1zM923 805h1v1h-1zM928 792h1v1h-1zM930 794h1v1h-1zM743 798h1v1h-1zM743 808h1v1h-1zM746 807h1v1h-1zM748 817h1v1h-1zM754 815h1v1h-1zM758 825h1v1h-1zM766 823h1v1h-1zM770 832h1v1h-1zM781 829h1v1h-1zM786 838h1v1h-1zM798 834h1v1h-1zM804 842h1v1h-1zM818 838h1v1h-1zM824 845h1v1h-1zM838 839h1v1h-1zM844 846h1v1h-1zM858 839h1v1h-1zM864 845h1v1h-1zM877 837h1v1h-1zM883 843h1v1h-1zM894 833h1v1h-1zM899 838h1v1h-1zM909 828h1v1h-1zM912 832h1v1h-1zM920 821h1v1h-1zM922 825h1v1h-1zM927 812h1v1h-1zM929 814h1v1h-1zM743 818h1v1h-1zM743 828h1v1h-1zM746 827h1v1h-1zM748 837h1v1h-1zM754 835h1v1h-1zM757 845h1v1h-1zM765 843h1v1h-1zM770 852h1v1h-1zM780 850h1v1h-1zM786 858h1v1h-1zM798 855h1v1h-1zM804 863h1v1h-1zM817 858h1v1h-1zM823 866h1v1h-1zM837 860h1v1h-1zM843 867h1v1h-1zM857 860h1v1h-1zM863 866h1v1h-1zM876 857h1v1h-1zM882 863h1v1h-1zM893 854h1v1h-1zM898 859h1v1h-1zM908 848h1v1h-1zM911 853h1v1h-1zM919 841h1v1h-1zM921 845h1v1h-1zM926 832h1v1h-1zM928 835h1v1h-1zM742 838h1v1h-1zM743 848h1v1h-1zM746 847h1v1h-1zM748 857h1v1h-1zM753 856h1v1h-1zM757 865h1v1h-1zM765 863h1v1h-1zM769 873h1v1h-1zM780 870h1v1h-1zM785 879h1v1h-1zM797 875h1v1h-1zM803 883h1v1h-1zM816 879h1v1h-1zM823 886h1v1h-1zM836 880h1v1h-1zM843 887h1v1h-1zM856 880h1v1h-1zM862 887h1v1h-1zM875 878h1v1h-1zM881 884h1v1h-1zM892 874h1v1h-1zM897 879h1v1h-1zM907 869h1v1h-1zM910 873h1v1h-1zM918 862h1v1h-1zM920 866h1v1h-1zM925 852h1v1h-1zM926 855h1v1h-1zM742 858h1v1h-1zM742 868h1v1h-1zM745 867h1v1h-1zM747 877h1v1h-1zM753 876h1v1h-1zM756 885h1v1h-1zM765 884h1v1h-1zM769 893h1v1h-1zM779 890h1v1h-1zM785 899h1v1h-1zM797 896h1v1h-1zM803 904h1v1h-1zM816 899h1v1h-1zM822 907h1v1h-1zM836 901h1v1h-1zM842 908h1v1h-1zM855 901h1v1h-1zM862 907h1v1h-1zM874 899h1v1h-1zM880 904h1v1h-1zM891 895h1v1h-1zM896 900h1v1h-1zM906 889h1v1h-1zM909 894h1v1h-1zM917 882h1v1h-1zM919 886h1v1h-1zM924 873h1v1h-1zM925 875h1v1h-1z" fill="#3434c8" fill-opacity="0.75"/>
<path d="M747.6,470 747.3,489.9 747,509.9 746.7,529.8 746.4,549.7 746.1,569.7 745.8,589.6 745.5,609.5 745.2,629.4 744.9,649.4 744.5,669.3 744.2,689.2 743.9,709.2 743.6,729.1 743.3,749 743,769 742.7,788.9 742.4,808.8 742.1,828.7 741.8,848.7 741.5,868.6" fill="none" stroke="#4a4a4a" stroke-width="1.2"/>
<path d="M949,475 947.9,495.1 946.8,515.3 945.7,535.5 944.6,555.6 943.5,575.8 942.5,595.9 941.4,616 940.3,636.2 939.2,656.4 938.1,676.5 937,696.7 935.9,716.8 934.8,737 933.7,757.1 932.7,777.2 931.6,797.4 930.5,817.6 929.4,837.7 928.3,857.8 927.2,878" fill="none" stroke="#4a4a4a" stroke-width="1.2"/>
<ellipse cx="848.3" cy="472.5" rx="101" ry="31.5" transform="rotate(1.4 848.3 472.5)" fill="#6c6c6c" stroke="#555" stroke-width="1"/>
<path d="M871.5,476.1 857.8,480 838.5,479.5 824.9,474.9 825.1,468.9 838.8,465 858.1,465.5 871.7,470.1 871.5,476.1 M871.5,476.1 848.3,472.5 M857.8,480 848.3,472.5 M838.5,479.5 848.3,472.5 M824.9,474.9 848.3,472.5 M825.1,468.9 848.3,472.5 M838.8,465 848.3,472.5 M858.1,465.5 848.3,472.5 M871.7,470.1 848.3,472.5 M898.8,473.7 894.8,479.7 883.7,484.5 867.3,487.5 847.9,488.2 828.6,486.6 812.3,482.8 801.5,477.4 797.8,471.3 801.8,465.3 812.9,460.5 829.3,457.5 848.7,456.8 868,458.4 884.3,462.2 895.1,467.6 898.8,473.7 M898.8,473.7 871.5,476.1 M898.8,473.7 857.8,480 M894.8,479.7 871.5,476.1 M894.8,479.7 857.8,480 M883.7,484.5 857.8,480 M883.7,484.5 838.5,479.5 M867.3,487.5 857.8,480 M867.3,487.5 838.5,479.5 M847.9,488.2 838.5,479.5 M847.9,488.2 824.9,474.9 M828.6,486.6 838.5,479.5 M828.6,486.6 824.9,474.9 M812.3,482.8 824.9,474.9 M812.3,482.8 825.1,468.9 M801.5,477.4 824.9,474.9 M801.5,477.4 825.1,468.9 M797.8,471.3 825.1,468.9 M797.8,471.3 838.8,465 M801.8,465.3 825.1,468.9 M801.8,465.3 838.8,465 M812.9,460.5 838.8,465 M812.9,460.5 858.1,465.5 M829.3,457.5 838.8,465 M829.3,457.5 858.1,465.5 M848.7,456.8 858.1,465.5 M848.7,456.8 871.7,470.1 M868,458.4 858.1,465.5 M868,458.4 871.7,470.1 M884.3,462.2 871.7,470.1 M884.3,462.2 871.5,476.1 M895.1,467.6 871.7,470.1 M895.1,467.6 871.5,476.1 M923.3,477.4 918,483.2 908,488.3 893.9,492.4 876.7,495 857.6,496.2 837.8,495.7 818.8,493.6 801.7,490.1 787.9,485.4 778.1,479.8 773.1,473.7 773.3,467.6 778.6,461.8 788.6,456.7 802.7,452.6 819.9,450 839,448.8 858.8,449.3 877.8,451.4 894.9,454.9 908.7,459.6 918.5,465.2 923.5,471.3 923.3,477.4 M923.3,477.4 898.8,473.7 M923.3,477.4 894.8,479.7 M918,483.2 898.8,473.7 M918,483.2 894.8,479.7 M908,488.3 894.8,479.7 M908,488.3 883.7,484.5 M893.9,492.4 883.7,484.5 M893.9,492.4 867.3,487.5 M876.7,495 883.7,484.5 M876.7,495 867.3,487.5 M857.6,496.2 867.3,487.5 M857.6,496.2 847.9,488.2 M837.8,495.7 847.9,488.2 M837.8,495.7 828.6,486.6 M818.8,493.6 847.9,488.2 M818.8,493.6 828.6,486.6 M801.7,490.1 828.6,486.6 M801.7,490.1 812.3,482.8 M787.9,485.4 812.3,482.8 M787.9,485.4 801.5,477.4 M778.1,479.8 812.3,482.8 M778.1,479.8 801.5,477.4 M773.1,473.7 801.5,477.4 M773.1,473.7 797.8,471.3 M773.3,467.6 797.8,471.3 M773.3,467.6 801.8,465.3 M778.6,461.8 797.8,471.3 M778.6,461.8 801.8,465.3 M788.6,456.7 801.8,465.3 M788.6,456.7 812.9,460.5 M802.7,452.6 801.8,465.3 M802.7,452.6 812.9,460.5 M819.9,450 812.9,460.5 M819.9,450 829.3,457.5 M839,448.8 829.3,457.5 M839,448.8 848.7,456.8 M858.8,449.3 848.7,456.8 M858.8,449.3 868,458.4 M877.8,451.4 848.7,456.8 M877.8,451.4 868,458.4 M894.9,454.9 868,458.4 M894.9,454.9 884.3,462.2 M908.7,459.6 884.3,462.2 M908.7,459.6 895.1,467.6 M918.5,465.2 884.3,462.2 M918.5,465.2 895.1,467.6 M923.5,471.3 895.1,467.6 M923.5,471.3 898.8,473.7 M949.3,475 947.2,481.1 941.3,486.8 931.8,492 919.2,496.5 903.8,500.1 886.2,502.5 867.2,503.9 847.5,504 827.8,502.9 808.9,500.6 791.6,497.3 776.4,493 763.9,487.9 754.7,482.3 749.1,476.2 747.3,470 749.4,463.9 755.3,458.2 764.8,453 777.4,448.5 792.8,444.9 810.4,442.5 829.4,441.1 849.1,441 868.8,442.1 887.7,444.4 905,447.7 920.2,452 932.7,457.1 941.9,462.7 947.5,468.8 949.3,475 M949.3,475 923.3,477.4 M949.3,475 918,483.2 M947.2,481.1 923.3,477.4 M947.2,481.1 918,483.2 M941.3,486.8 918,483.2 M941.3,486.8 908,488.3 M931.8,492 908,488.3 M931.8,492 893.9,492.4 M919.2,496.5 893.9,492.4 M919.2,496.5 876.7,495 M903.8,500.1 893.9,492.4 M903.8,500.1 876.7,495 M886.2,502.5 876.7,495 M886.2,502.5 857.6,496.2 M867.2,503.9 857.6,496.2 M867.2,503.9 837.8,495.7 M847.5,504 837.8,495.7 M847.5,504 818.8,493.6 M827.8,502.9 837.8,495.7 M827.8,502.9 818.8,493.6 M808.9,500.6 818.8,493.6 M808.9,500.6 801.7,490.1 M791.6,497.3 801.7,490.1 M791.6,497.3 787.9,485.4 M776.4,493 787.9,485.4 M776.4,493 778.1,479.8 M763.9,487.9 787.9,485.4 M763.9,487.9 778.1,479.8 M754.7,482.3 778.1,479.8 M754.7,482.3 773.1,473.7 M749.1,476.2 773.1,473.7 M749.1,476.2 773.3,467.6 M747.3,470 773.3,467.6 M747.3,470 778.6,461.8 M749.4,463.9 773.3,467.6 M749.4,463.9 778.6,461.8 M755.3,458.2 778.6,461.8 M755.3,458.2 788.6,456.7 M764.8,453 788.6,456.7 M764.8,453 802.7,452.6 M777.4,448.5 802.7,452.6 M777.4,448.5 819.9,450 M792.8,444.9 802.7,452.6 M792.8,444.9 819.9,450 M810.4,442.5 819.9,450 M810.4,442.5 839,448.8 M829.4,441.1 839,448.8 M829.4,441.1 858.8,449.3 M849.1,441 858.8,449.3 M849.1,441 877.8,451.4 M868.8,442.1 858.8,449.3 M868.8,442.1 877.8,451.4 M887.7,444.4 877.8,451.4 M887.7,444.4 894.9,454.9 M905,447.7 894.9,454.9 M905,447.7 908.7,459.6 M920.2,452 908.7,459.6 M920.2,452 918.5,465.2 M932.7,457.1 908.7,459.6 M932.7,457.1 918.5,465.2 M941.9,462.7 918.5,465.2 M941.9,462.7 923.5,471.3 M947.5,468.8 923.5,471.3 M947.5,468.8 923.3,477.4" fill="none" stroke="#909090" stroke-width="0.9" stroke-opacity="0.8"/>
<path d="M554.6,403.2 571.9,401.6 592.3,399.3 612.7,397 633.1,394.7 653.5,392.3 673.9,390 694.3,387.8 714.7,385.6 735.1,383.5 755.5,381.7 776,382 783,383.6 789.2,387.3 794.3,392.3 798.9,397.9 802.4,404.2 805.3,410.8 807.3,417.8 808.6,424.9 809.6,432 809.4,445.3 809.7,458.7 810,472 813.9,476.8 813.6,463.1 813.5,449.4 814,435.8 813.5,427.9 812.4,420.1 810.7,412.4 808,404.9 804.5,397.8 799.7,391.5 794.4,385.8 788.1,381.1 780.9,378.4 760.4,377.5 740,379.1 719.6,381 699.2,383.2 678.8,385.4 658.4,387.6 638,389.9 617.6,392.2 597.3,394.5 576.9,396.8 559.5,398.4Z" fill="#404040"/>
<path d="M559.5,398.4 576.9,396.8 597.3,394.5 617.6,392.2 638,389.9 658.4,387.6 678.8,385.4 699.2,383.2 719.6,381 740,379.1 760.4,377.5 780.9,378.4 788.1,381.1 794.4,385.8 799.7,391.5 804.5,397.8 808,404.9 810.7,412.4 812.4,420.1 813.5,427.9 814,435.8 813.5,449.4 813.6,463.1 813.9,476.8 825,480.6 824.8,466.1 824.7,451.5 825.4,437 825,427.5 823.8,418 821.8,408.7 818.4,399.7 813.9,391.3 808,383.9 801.4,377.1 794.1,371.1 785.4,367.4 764.9,366.1 744.4,367.3 723.9,369.1 703.4,371.1 682.9,373.2 662.4,375.4 642,377.6 621.5,379.8 601.1,382 580.6,384.3 562.7,385.9Z" fill="#747474"/>
<path d="M562.7,385.9 580.6,384.3 601.1,382 621.5,379.8 642,377.6 662.4,375.4 682.9,373.2 703.4,371.1 723.9,369.1 744.4,367.3 764.9,366.1 785.4,367.4 794.1,371.1 801.4,377.1 808,383.9 813.9,391.3 818.4,399.7 821.8,408.7 823.8,418 825,427.5 825.4,437 824.7,451.5 824.8,466.1 825,480.6 838.6,482.6 838.6,467 838.6,451.4 839.2,435.8 838.7,424.4 837.1,413 834.1,401.8 829.7,391.2 823.7,381.4 816.1,372.9 807.9,365.1 798.9,358.1 788.4,353.6 767.8,352 747.1,353 726.4,354.6 705.8,356.5 685.2,358.5 664.6,360.6 644,362.7 623.4,364.8 602.8,366.9 582.2,369.1 563.6,370.7Z" fill="#b6b6b6"/>
<path d="M563.6,370.7 582.2,369.1 602.8,366.9 623.4,364.8 644,362.7 664.6,360.6 685.2,358.5 705.8,356.5 726.4,354.6 747.1,353 767.8,352 788.4,353.6 798.9,358.1 807.9,365.1 816.1,372.9 823.7,381.4 829.7,391.2 834.1,401.8 837.1,413 838.7,424.4 839.2,435.8 838.6,451.4 838.6,467 838.6,482.6 853.4,482.9 853.5,466.3 853.6,449.6 854.1,432.9 853.3,419.3 850.9,405.9 846.8,392.9 840.9,380.7 833.2,369.6 823.7,359.9 813.5,351.2 802.6,343.3 790,338.5 769.2,336.8 748.3,337.5 727.5,339.1 706.7,340.8 685.9,342.7 665.1,344.7 644.4,346.7 623.6,348.7 602.8,350.7 582,352.7 562.7,354.4Z" fill="#d4d4d4"/>
<path d="M562.7,354.4 582,352.7 602.8,350.7 623.6,348.7 644.4,346.7 665.1,344.7 685.9,342.7 706.7,340.8 727.5,339.1 748.3,337.5 769.2,336.8 790,338.5 802.6,343.3 813.5,351.2 823.7,359.9 833.2,369.6 840.9,380.7 846.8,392.9 850.9,405.9 853.3,419.3 854.1,432.9 853.6,449.6 853.5,466.3 853.4,482.9 868.4,481.6 868.7,463.9 868.9,446.1 869.1,428.3 867.6,412.6 864.3,397.3 859,382.5 851.4,368.7 841.7,356.4 830.2,345.8 818,336.3 804.8,327.9 790.1,323.1 769.1,321.4 748,322 727,323.4 706,325.1 685,326.9 664,328.7 643,330.6 622,332.5 601.1,334.4 580.1,336.3 559.9,338Z" fill="#d0d0d0"/>
<path d="M559.9,338 580.1,336.3 601.1,334.4 622,332.5 643,330.6 664,328.7 685,326.9 706,325.1 727,323.4 748,322 769.1,321.4 790.1,323.1 804.8,327.9 818,336.3 830.2,345.8 841.7,356.4 851.4,368.7 859,382.5 864.3,397.3 867.6,412.6 869.1,428.3 868.9,446.1 868.7,463.9 868.4,481.6 881.1,478.6 881.5,459.9 881.7,441.2 881.6,422.5 879.3,405.2 875.1,388.2 868.4,372.1 859.2,357.2 847.7,344.1 834.3,332.9 820.1,322.9 805,314.3 788.2,309.9 767.1,308.5 745.8,309.1 724.6,310.4 703.4,312 682.2,313.7 661,315.5 639.9,317.3 618.7,319.1 597.5,320.9 576.3,322.7 555.5,324.3Z" fill="#b4b4b4"/>
<path d="M555.5,324.3 576.3,322.7 597.5,320.9 618.7,319.1 639.9,317.3 661,315.5 682.2,313.7 703.4,312 724.6,310.4 745.8,309.1 767.1,308.5 788.2,309.9 805,314.3 820.1,322.9 834.3,332.9 847.7,344.1 859.2,357.2 868.4,372.1 875.1,388.2 879.3,405.2 881.6,422.5 881.7,441.2 881.5,459.9 881.1,478.6 889,472 889.4,452.8 889.7,433.6 889,414.4 885.7,396.1 880.3,378.3 872.2,361.7 861.5,346.5 848.3,333.4 833.5,322.1 817.8,312.2 801,304.4 782.7,301.3 761.3,300.4 739.9,301.3 718.5,302.7 697.1,304.3 675.8,305.9 654.4,307.7 633,309.4 611.7,311.2 590.3,312.9 569,314.6 547.6,316.2Z" fill="#7a7a7a"/>
<path d="M554.6,403.2 559.5,398.4 562.7,385.9 563.6,370.7 562.7,354.4 559.9,338 555.5,324.3 547.6,316.2 M571.9,401.6 576.9,396.8 580.6,384.3 582.2,369.1 582,352.7 580.1,336.3 576.3,322.7 569,314.6 M592.3,399.3 597.3,394.5 601.1,382 602.8,366.9 602.8,350.7 601.1,334.4 597.5,320.9 590.3,312.9 M612.7,397 617.6,392.2 621.5,379.8 623.4,364.8 623.6,348.7 622,332.5 618.7,319.1 611.7,311.2 M633.1,394.7 638,389.9 642,377.6 644,362.7 644.4,346.7 643,330.6 639.9,317.3 633,309.4 M653.5,392.3 658.4,387.6 662.4,375.4 664.6,360.6 665.1,344.7 664,328.7 661,315.5 654.4,307.7 M673.9,390 678.8,385.4 682.9,373.2 685.2,358.5 685.9,342.7 685,326.9 682.2,313.7 675.8,305.9 M694.3,387.8 699.2,383.2 703.4,371.1 705.8,356.5 706.7,340.8 706,325.1 703.4,312 697.1,304.3 M714.7,385.6 719.6,381 723.9,369.1 726.4,354.6 727.5,339.1 727,323.4 724.6,310.4 718.5,302.7 M735.1,383.5 740,379.1 744.4,367.3 747.1,353 748.3,337.5 748,322 745.8,309.1 739.9,301.3 M755.5,381.7 760.4,377.5 764.9,366.1 767.8,352 769.2,336.8 769.1,321.4 767.1,308.5 761.3,300.4 M776,382 780.9,378.4 785.4,367.4 788.4,353.6 790,338.5 790.1,323.1 788.2,309.9 782.7,301.3 M783,383.6 788.1,381.1 794.1,371.1 798.9,358.1 802.6,343.3 804.8,327.9 805,314.3 801,304.4 M789.2,387.3 794.4,385.8 801.4,377.1 807.9,365.1 813.5,351.2 818,336.3 820.1,322.9 817.8,312.2 M794.3,392.3 799.7,391.5 808,383.9 816.1,372.9 823.7,359.9 830.2,345.8 834.3,332.9 833.5,322.1 M798.9,397.9 804.5,397.8 813.9,391.3 823.7,381.4 833.2,369.6 841.7,356.4 847.7,344.1 848.3,333.4 M802.4,404.2 808,404.9 818.4,399.7 829.7,391.2 840.9,380.7 851.4,368.7 859.2,357.2 861.5,346.5 M805.3,410.8 810.7,412.4 821.8,408.7 834.1,401.8 846.8,392.9 859,382.5 868.4,372.1 872.2,361.7 M807.3,417.8 812.4,420.1 823.8,418 837.1,413 850.9,405.9 864.3,397.3 875.1,388.2 880.3,378.3 M808.6,424.9 813.5,427.9 825,427.5 838.7,424.4 853.3,419.3 867.6,412.6 879.3,405.2 885.7,396.1 M809.6,432 814,435.8 825.4,437 839.2,435.8 854.1,432.9 869.1,428.3 881.6,422.5 889,414.4 M809.4,445.3 813.5,449.4 824.7,451.5 838.6,451.4 853.6,449.6 868.9,446.1 881.7,441.2 889.7,433.6 M809.7,458.7 813.6,463.1 824.8,466.1 838.6,467 853.5,466.3 868.7,463.9 881.5,459.9 889.4,452.8 M810,472 813.9,476.8 825,480.6 838.6,482.6 853.4,482.9 868.4,481.6 881.1,478.6 889,472 M559.5,398.4 576.9,396.8 597.3,394.5 617.6,392.2 638,389.9 658.4,387.6 678.8,385.4 699.2,383.2 719.6,381 740,379.1 760.4,377.5 780.9,378.4 788.1,381.1 794.4,385.8 799.7,391.5 804.5,397.8 808,404.9 810.7,412.4 812.4,420.1 813.5,427.9 814,435.8 813.5,449.4 813.6,463.1 813.9,476.8 M562.7,385.9 580.6,384.3 601.1,382 621.5,379.8 642,377.6 662.4,375.4 682.9,373.2 703.4,371.1 723.9,369.1 744.4,367.3 764.9,366.1 785.4,367.4 794.1,371.1 801.4,377.1 808,383.9 813.9,391.3 818.4,399.7 821.8,408.7 823.8,418 825,427.5 825.4,437 824.7,451.5 824.8,466.1 825,480.6 M563.6,370.7 582.2,369.1 602.8,366.9 623.4,364.8 644,362.7 664.6,360.6 685.2,358.5 705.8,356.5 726.4,354.6 747.1,353 767.8,352 788.4,353.6 798.9,358.1 807.9,365.1 816.1,372.9 823.7,381.4 829.7,391.2 834.1,401.8 837.1,413 838.7,424.4 839.2,435.8 838.6,451.4 838.6,467 838.6,482.6 M562.7,354.4 582,352.7 602.8,350.7 623.6,348.7 644.4,346.7 665.1,344.7 685.9,342.7 706.7,340.8 727.5,339.1 748.3,337.5 769.2,336.8 790,338.5 802.6,343.3 813.5,351.2 823.7,359.9 833.2,369.6 840.9,380.7 846.8,392.9 850.9,405.9 853.3,419.3 854.1,432.9 853.6,449.6 853.5,466.3 853.4,482.9 M559.9,338 580.1,336.3 601.1,334.4 622,332.5 643,330.6 664,328.7 685,326.9 706,325.1 727,323.4 748,322 769.1,321.4 790.1,323.1 804.8,327.9 818,336.3 830.2,345.8 841.7,356.4 851.4,368.7 859,382.5 864.3,397.3 867.6,412.6 869.1,428.3 868.9,446.1 868.7,463.9 868.4,481.6 M555.5,324.3 576.3,322.7 597.5,320.9 618.7,319.1 639.9,317.3 661,315.5 682.2,313.7 703.4,312 724.6,310.4 745.8,309.1 767.1,308.5 788.2,309.9 805,314.3 820.1,322.9 834.3,332.9 847.7,344.1 859.2,357.2 868.4,372.1 875.1,388.2 879.3,405.2 881.6,422.5 881.7,441.2 881.5,459.9 881.1,478.6 M554.6,403.2 576.9,396.8 M559.5,398.4 580.6,384.3 M562.7,385.9 582.2,369.1 M563.6,370.7 582,352.7 M562.7,354.4 580.1,336.3 M559.9,338 576.3,322.7 M555.5,324.3 569,314.6 M571.9,401.6 597.3,394.5 M576.9,396.8 601.1,382 M580.6,384.3 602.8,366.9 M582.2,369.1 602.8,350.7 M582,352.7 601.1,334.4 M580.1,336.3 597.5,320.9 M576.3,322.7 590.3,312.9 M592.3,399.3 617.6,392.2 M597.3,394.5 621.5,379.8 M601.1,382 623.4,364.8 M602.8,366.9 623.6,348.7 M602.8,350.7 622,332.5 M601.1,334.4 618.7,319.1 M597.5,320.9 611.7,311.2 M612.7,397 638,389.9 M617.6,392.2 642,377.6 M621.5,379.8 644,362.7 M623.4,364.8 644.4,346.7 M623.6,348.7 643,330.6 M622,332.5 639.9,317.3 M618.7,319.1 633,309.4 M633.1,394.7 658.4,387.6 M638,389.9 662.4,375.4 M642,377.6 664.6,360.6 M644,362.7 665.1,344.7 M644.4,346.7 664,328.7 M643,330.6 661,315.5 M639.9,317.3 654.4,307.7 M653.5,392.3 678.8,385.4 M658.4,387.6 682.9,373.2 M662.4,375.4 685.2,358.5 M664.6,360.6 685.9,342.7 M665.1,344.7 685,326.9 M664,328.7 682.2,313.7 M661,315.5 675.8,305.9 M673.9,390 699.2,383.2 M678.8,385.4 703.4,371.1 M682.9,373.2 705.8,356.5 M685.2,358.5 706.7,340.8 M685.9,342.7 706,325.1 M685,326.9 703.4,312 M682.2,313.7 697.1,304.3 M694.3,387.8 719.6,381 M699.2,383.2 723.9,369.1 M703.4,371.1 726.4,354.6 M705.8,356.5 727.5,339.1 M706.7,340.8 727,323.4 M706,325.1 724.6,310.4 M703.4,312 718.5,302.7 M714.7,385.6 740,379.1 M719.6,381 744.4,367.3 M723.9,369.1 747.1,353 M726.4,354.6 748.3,337.5 M727.5,339.1 748,322 M727,323.4 745.8,309.1 M724.6,310.4 739.9,301.3 M735.1,383.5 760.4,377.5 M740,379.1 764.9,366.1 M744.4,367.3 767.8,352 M747.1,353 769.2,336.8 M748.3,337.5 769.1,321.4 M748,322 767.1,308.5 M745.8,309.1 761.3,300.4 M755.5,381.7 780.9,378.4 M760.4,377.5 785.4,367.4 M764.9,366.1 788.4,353.6 M767.8,352 790,338.5 M769.2,336.8 790.1,323.1 M769.1,321.4 788.2,309.9 M767.1,308.5 782.7,301.3 M776,382 788.1,381.1 M780.9,378.4 794.1,371.1 M785.4,367.4 798.9,358.1 M788.4,353.6 802.6,343.3 M790,338.5 804.8,327.9 M790.1,323.1 805,314.3 M788.2,309.9 801,304.4 M783,383.6 794.4,385.8 M788.1,381.1 801.4,377.1 M794.1,371.1 807.9,365.1 M798.9,358.1 813.5,351.2 M802.6,343.3 818,336.3 M804.8,327.9 820.1,322.9 M805,314.3 817.8,312.2 M789.2,387.3 799.7,391.5 M794.4,385.8 808,383.9 M801.4,377.1 816.1,372.9 M807.9,365.1 823.7,359.9 M813.5,351.2 830.2,345.8 M818,336.3 834.3,332.9 M820.1,322.9 833.5,322.1 M794.3,392.3 804.5,397.8 M799.7,391.5 813.9,391.3 M808,383.9 823.7,381.4 M816.1,372.9 833.2,369.6 M823.7,359.9 841.7,356.4 M830.2,345.8 847.7,344.1 M834.3,332.9 848.3,333.4 M798.9,397.9 808,404.9 M804.5,397.8 818.4,399.7 M813.9,391.3 829.7,391.2 M823.7,381.4 840.9,380.7 M833.2,369.6 851.4,368.7 M841.7,356.4 859.2,357.2 M847.7,344.1 861.5,346.5 M802.4,404.2 810.7,412.4 M808,404.9 821.8,408.7 M818.4,399.7 834.1,401.8 M829.7,391.2 846.8,392.9 M840.9,380.7 859,382.5 M851.4,368.7 868.4,372.1 M859.2,357.2 872.2,361.7 M805.3,410.8 812.4,420.1 M810.7,412.4 823.8,418 M821.8,408.7 837.1,413 M834.1,401.8 850.9,405.9 M846.8,392.9 864.3,397.3 M859,382.5 875.1,388.2 M868.4,372.1 880.3,378.3 M807.3,417.8 813.5,427.9 M812.4,420.1 825,427.5 M823.8,418 838.7,424.4 M837.1,413 853.3,419.3 M850.9,405.9 867.6,412.6 M864.3,397.3 879.3,405.2 M875.1,388.2 885.7,396.1 M808.6,424.9 814,435.8 M813.5,427.9 825.4,437 M825,427.5 839.2,435.8 M838.7,424.4 854.1,432.9 M853.3,419.3 869.1,428.3 M867.6,412.6 881.6,422.5 M879.3,405.2 889,414.4 M809.6,432 813.5,449.4 M814,435.8 824.7,451.5 M825.4,437 838.6,451.4 M839.2,435.8 853.6,449.6 M854.1,432.9 868.9,446.1 M869.1,428.3 881.7,441.2 M881.6,422.5 889.7,433.6 M809.4,445.3 813.6,463.1 M813.5,449.4 824.8,466.1 M824.7,451.5 838.6,467 M838.6,451.4 853.5,466.3 M853.6,449.6 868.7,463.9 M868.9,446.1 881.5,459.9 M881.7,441.2 889.4,452.8 M809.7,458.7 813.9,476.8 M813.6,463.1 825,480.6 M824.8,466.1 838.6,482.6 M838.6,467 853.4,482.9 M853.5,466.3 868.4,481.6 M868.7,463.9 881.1,478.6 M881.5,459.9 889,472" fill="none" stroke="#6a6a6a" stroke-width="1.15" stroke-opacity="0.9"/>
<path d="M567 400h1v1h-1zM563 399h1v1h-1zM572 393h1v1h-1zM567 389h1v1h-1zM575 379h1v1h-1zM569 375h1v1h-1zM575 364h1v1h-1zM569 359h1v1h-1zM574 347h1v1h-1zM567 342h1v1h-1zM572 332h1v1h-1zM563 328h1v1h-1zM566 320h1v1h-1zM557 318h1v1h-1zM587 398h1v1h-1zM582 397h1v1h-1zM591 391h1v1h-1zM586 387h1v1h-1zM594 377h1v1h-1zM588 373h1v1h-1zM595 362h1v1h-1zM589 357h1v1h-1zM595 345h1v1h-1zM587 341h1v1h-1zM592 330h1v1h-1zM584 326h1v1h-1zM588 318h1v1h-1zM578 316h1v1h-1zM607 396h1v1h-1zM602 395h1v1h-1zM612 388h1v1h-1zM606 385h1v1h-1zM615 375h1v1h-1zM609 371h1v1h-1zM616 360h1v1h-1zM609 355h1v1h-1zM616 343h1v1h-1zM608 339h1v1h-1zM613 328h1v1h-1zM605 324h1v1h-1zM609 317h1v1h-1zM599 314h1v1h-1zM627 393h1v1h-1zM622 393h1v1h-1zM632 386h1v1h-1zM627 383h1v1h-1zM635 373h1v1h-1zM629 369h1v1h-1zM637 358h1v1h-1zM630 353h1v1h-1zM636 341h1v1h-1zM629 337h1v1h-1zM634 326h1v1h-1zM626 322h1v1h-1zM630 315h1v1h-1zM621 313h1v1h-1zM648 391h1v1h-1zM643 390h1v1h-1zM652 384h1v1h-1zM647 380h1v1h-1zM656 371h1v1h-1zM650 366h1v1h-1zM657 355h1v1h-1zM651 351h1v1h-1zM657 340h1v1h-1zM650 335h1v1h-1zM656 324h1v1h-1zM647 321h1v1h-1zM651 313h1v1h-1zM642 311h1v1h-1zM668 389h1v1h-1zM663 388h1v1h-1zM673 382h1v1h-1zM667 378h1v1h-1zM676 369h1v1h-1zM670 364h1v1h-1zM678 353h1v1h-1zM671 349h1v1h-1zM678 338h1v1h-1zM671 333h1v1h-1zM677 323h1v1h-1zM669 319h1v1h-1zM673 311h1v1h-1zM663 309h1v1h-1zM689 386h1v1h-1zM683 386h1v1h-1zM693 379h1v1h-1zM688 376h1v1h-1zM697 366h1v1h-1zM691 362h1v1h-1zM699 351h1v1h-1zM692 347h1v1h-1zM699 336h1v1h-1zM692 331h1v1h-1zM698 321h1v1h-1zM690 317h1v1h-1zM694 309h1v1h-1zM685 307h1v1h-1zM709 384h1v1h-1zM704 383h1v1h-1zM714 377h1v1h-1zM708 374h1v1h-1zM717 364h1v1h-1zM711 360h1v1h-1zM719 350h1v1h-1zM713 345h1v1h-1zM720 334h1v1h-1zM713 329h1v1h-1zM719 319h1v1h-1zM711 315h1v1h-1zM715 308h1v1h-1zM706 306h1v1h-1zM729 382h1v1h-1zM724 381h1v1h-1zM734 375h1v1h-1zM729 372h1v1h-1zM738 363h1v1h-1zM732 358h1v1h-1zM740 348h1v1h-1zM734 343h1v1h-1zM741 332h1v1h-1zM734 328h1v1h-1zM740 318h1v1h-1zM732 314h1v1h-1zM736 306h1v1h-1zM727 304h1v1h-1zM750 380h1v1h-1zM745 380h1v1h-1zM755 374h1v1h-1zM749 370h1v1h-1zM759 361h1v1h-1zM753 357h1v1h-1zM761 347h1v1h-1zM754 342h1v1h-1zM762 331h1v1h-1zM755 326h1v1h-1zM761 317h1v1h-1zM753 313h1v1h-1zM758 305h1v1h-1zM748 303h1v1h-1zM770 380h1v1h-1zM765 379h1v1h-1zM775 374h1v1h-1zM770 370h1v1h-1zM779 362h1v1h-1zM773 357h1v1h-1zM782 348h1v1h-1zM775 342h1v1h-1zM783 332h1v1h-1zM776 327h1v1h-1zM782 318h1v1h-1zM774 313h1v1h-1zM779 306h1v1h-1zM770 303h1v1h-1zM782 382h1v1h-1zM781 380h1v1h-1zM787 376h1v1h-1zM786 372h1v1h-1zM792 365h1v1h-1zM790 359h1v1h-1zM796 351h1v1h-1zM793 345h1v1h-1zM799 336h1v1h-1zM794 329h1v1h-1zM799 321h1v1h-1zM794 315h1v1h-1zM798 309h1v1h-1zM790 305h1v1h-1zM788 385h1v1h-1zM788 383h1v1h-1zM794 381h1v1h-1zM794 376h1v1h-1zM801 371h1v1h-1zM800 364h1v1h-1zM806 358h1v1h-1zM804 350h1v1h-1zM811 343h1v1h-1zM808 335h1v1h-1zM814 329h1v1h-1zM809 321h1v1h-1zM814 316h1v1h-1zM807 310h1v1h-1zM794 390h1v1h-1zM794 388h1v1h-1zM800 387h1v1h-1zM801 382h1v1h-1zM808 377h1v1h-1zM808 371h1v1h-1zM815 365h1v1h-1zM815 358h1v1h-1zM822 352h1v1h-1zM820 344h1v1h-1zM827 338h1v1h-1zM824 330h1v1h-1zM829 325h1v1h-1zM823 319h1v1h-1zM799 396h1v1h-1zM799 393h1v1h-1zM806 393h1v1h-1zM807 388h1v1h-1zM815 385h1v1h-1zM815 379h1v1h-1zM824 374h1v1h-1zM824 367h1v1h-1zM832 361h1v1h-1zM831 354h1v1h-1zM839 348h1v1h-1zM837 340h1v1h-1zM843 336h1v1h-1zM838 329h1v1h-1zM803 402h1v1h-1zM803 400h1v1h-1zM810 400h1v1h-1zM812 396h1v1h-1zM820 394h1v1h-1zM822 387h1v1h-1zM831 384h1v1h-1zM832 377h1v1h-1zM841 372h1v1h-1zM842 364h1v1h-1zM850 360h1v1h-1zM849 352h1v1h-1zM856 349h1v1h-1zM852 341h1v1h-1zM806 409h1v1h-1zM807 407h1v1h-1zM813 408h1v1h-1zM816 404h1v1h-1zM824 403h1v1h-1zM827 397h1v1h-1zM836 395h1v1h-1zM839 388h1v1h-1zM848 385h1v1h-1zM850 377h1v1h-1zM859 374h1v1h-1zM859 366h1v1h-1zM866 363h1v1h-1zM864 355h1v1h-1zM808 416h1v1h-1zM809 414h1v1h-1zM815 416h1v1h-1zM818 413h1v1h-1zM827 413h1v1h-1zM830 407h1v1h-1zM840 406h1v1h-1zM843 400h1v1h-1zM854 398h1v1h-1zM856 390h1v1h-1zM866 389h1v1h-1zM867 380h1v1h-1zM874 379h1v1h-1zM873 370h1v1h-1zM809 423h1v1h-1zM811 421h1v1h-1zM816 425h1v1h-1zM820 421h1v1h-1zM829 423h1v1h-1zM833 418h1v1h-1zM843 418h1v1h-1zM847 412h1v1h-1zM857 412h1v1h-1zM860 405h1v1h-1zM870 405h1v1h-1zM872 396h1v1h-1zM880 396h1v1h-1zM880 387h1v1h-1zM810 430h1v1h-1zM812 429h1v1h-1zM817 433h1v1h-1zM821 430h1v1h-1zM829 433h1v1h-1zM834 429h1v1h-1zM844 431h1v1h-1zM848 425h1v1h-1zM858 426h1v1h-1zM863 420h1v1h-1zM872 421h1v1h-1zM876 413h1v1h-1zM883 414h1v1h-1zM884 405h1v1h-1zM810 442h1v1h-1zM812 439h1v1h-1zM817 445h1v1h-1zM821 441h1v1h-1zM829 446h1v1h-1zM834 441h1v1h-1zM843 445h1v1h-1zM849 439h1v1h-1zM858 442h1v1h-1zM864 435h1v1h-1zM873 438h1v1h-1zM877 430h1v1h-1zM884 432h1v1h-1zM886 423h1v1h-1zM810 455h1v1h-1zM812 452h1v1h-1zM817 459h1v1h-1zM820 455h1v1h-1zM829 461h1v1h-1zM833 456h1v1h-1zM843 461h1v1h-1zM848 455h1v1h-1zM858 459h1v1h-1zM863 453h1v1h-1zM873 456h1v1h-1zM877 449h1v1h-1zM884 451h1v1h-1zM886 442h1v1h-1zM811 469h1v1h-1zM812 466h1v1h-1zM817 473h1v1h-1zM821 469h1v1h-1zM829 476h1v1h-1zM833 471h1v1h-1zM843 477h1v1h-1zM848 472h1v1h-1zM858 476h1v1h-1zM863 470h1v1h-1zM872 474h1v1h-1zM877 467h1v1h-1zM883 470h1v1h-1zM886 461h1v1h-1z" fill="#3434c8" fill-opacity="0.75"/>
<path d="M554.6,403.2 571.9,401.6 592.3,399.3 612.7,397 633.1,394.7 653.5,392.3 673.9,390 694.3,387.8 714.7,385.6 735.1,383.5 755.5,381.7 776,382 783,383.6 789.2,387.3 794.3,392.3 798.9,397.9 802.4,404.2 805.3,410.8 807.3,417.8 808.6,424.9 809.6,432 809.4,445.3 809.7,458.7 810,472" fill="none" stroke="#4a4a4a" stroke-width="1.2"/>
<path d="M547.6,316.2 569,314.6 590.3,312.9 611.7,311.2 633,309.4 654.4,307.7 675.8,305.9 697.1,304.3 718.5,302.7 739.9,301.3 761.3,300.4 782.7,301.3 801,304.4 817.8,312.2 833.5,322.1 848.3,333.4 861.5,346.5 872.2,361.7 880.3,378.3 885.7,396.1 889,414.4 889.7,433.6 889.4,452.8 889,472" fill="none" stroke="#4a4a4a" stroke-width="1.2"/>
<ellipse cx="551.1" cy="359.7" rx="11.2" ry="43.8" transform="rotate(-4.6 551.1 359.7)" fill="#6a6a6a" stroke="#555" stroke-width="1"/>
<path d="M555,364.4 554,372.2 551.6,374.1 549,369.3 547.4,360 547.5,350.6 549.3,345.4 551.9,346.9 554.2,354.4 555,364.4 M555,364.4 551.1,359.7 M554,372.2 551.1,359.7 M551.6,374.1 551.1,359.7 M549,369.3 551.1,359.7 M547.4,360 551.1,359.7 M547.5,350.6 551.1,359.7 M549.3,345.4 551.1,359.7 M551.9,346.9 551.1,359.7 M554.2,354.4 551.1,359.7 M558.5,359.1 558.9,369.1 558.3,378 556.8,384.6 554.7,388.3 552.1,388.5 549.4,385.2 546.9,378.9 544.9,370.2 543.7,360.3 543.3,350.3 543.9,341.4 545.4,334.8 547.5,331.1 550.1,330.9 552.8,334.2 555.3,340.5 557.3,349.2 558.5,359.1 M558.5,359.1 555,364.4 M558.5,359.1 554,372.2 M558.9,369.1 555,364.4 M558.9,369.1 554,372.2 M558.3,378 554,372.2 M558.3,378 551.6,374.1 M556.8,384.6 554,372.2 M556.8,384.6 551.6,374.1 M554.7,388.3 551.6,374.1 M554.7,388.3 549,369.3 M552.1,388.5 551.6,374.1 M552.1,388.5 549,369.3 M549.4,385.2 549,369.3 M549.4,385.2 547.4,360 M546.9,378.9 549,369.3 M546.9,378.9 547.4,360 M544.9,370.2 547.4,360 M544.9,370.2 547.5,350.6 M543.7,360.3 547.4,360 M543.7,360.3 547.5,350.6 M543.3,350.3 547.5,350.6 M543.3,350.3 549.3,345.4 M543.9,341.4 547.5,350.6 M543.9,341.4 549.3,345.4 M545.4,334.8 549.3,345.4 M545.4,334.8 551.9,346.9 M547.5,331.1 549.3,345.4 M547.5,331.1 551.9,346.9 M550.1,330.9 551.9,346.9 M550.1,330.9 554.2,354.4 M552.8,334.2 551.9,346.9 M552.8,334.2 554.2,354.4 M555.3,340.5 554.2,354.4 M555.3,340.5 555,364.4 M557.3,349.2 554.2,354.4 M557.3,349.2 555,364.4 M562.6,363.9 562.8,373.8 562.4,382.9 561.3,390.8 559.7,397.1 557.7,401.3 555.3,403.2 552.6,402.9 549.9,400.1 547.3,395.3 544.8,388.5 542.7,380.1 541,370.6 539.9,360.6 539.4,350.5 539.5,340.9 540.3,332.3 541.6,325.2 543.5,320 545.7,316.9 548.2,316.1 550.9,317.6 553.6,321.4 556.2,327.3 558.5,335 560.4,343.9 561.8,353.7 562.6,363.9 M562.6,363.9 558.5,359.1 M562.6,363.9 558.9,369.1 M562.8,373.8 558.5,359.1 M562.8,373.8 558.9,369.1 M562.4,382.9 558.9,369.1 M562.4,382.9 558.3,378 M561.3,390.8 558.3,378 M561.3,390.8 556.8,384.6 M559.7,397.1 558.3,378 M559.7,397.1 556.8,384.6 M557.7,401.3 556.8,384.6 M557.7,401.3 554.7,388.3 M555.3,403.2 554.7,388.3 M555.3,403.2 552.1,388.5 M552.6,402.9 554.7,388.3 M552.6,402.9 552.1,388.5 M549.9,400.1 552.1,388.5 M549.9,400.1 549.4,385.2 M547.3,395.3 549.4,385.2 M547.3,395.3 546.9,378.9 M544.8,388.5 549.4,385.2 M544.8,388.5 546.9,378.9 M542.7,380.1 546.9,378.9 M542.7,380.1 544.9,370.2 M541,370.6 544.9,370.2 M541,370.6 543.7,360.3 M539.9,360.6 544.9,370.2 M539.9,360.6 543.7,360.3 M539.4,350.5 543.7,360.3 M539.4,350.5 543.3,350.3 M539.5,340.9 543.7,360.3 M539.5,340.9 543.3,350.3 M540.3,332.3 543.3,350.3 M540.3,332.3 543.9,341.4 M541.6,325.2 543.9,341.4 M541.6,325.2 545.4,334.8 M543.5,320 545.4,334.8 M543.5,320 547.5,331.1 M545.7,316.9 545.4,334.8 M545.7,316.9 547.5,331.1 M548.2,316.1 547.5,331.1 M548.2,316.1 550.1,330.9 M550.9,317.6 550.1,330.9 M550.9,317.6 552.8,334.2 M553.6,321.4 550.1,330.9 M553.6,321.4 552.8,334.2 M556.2,327.3 552.8,334.2 M556.2,327.3 555.3,340.5 M558.5,335 555.3,340.5 M558.5,335 557.3,349.2 M560.4,343.9 555.3,340.5 M560.4,343.9 557.3,349.2 M561.8,353.7 557.3,349.2 M561.8,353.7 558.5,359.1" fill="none" stroke="#8e8e8e" stroke-width="0.9" stroke-opacity="0.8"/>
</g>
<g>
<line x1="587.5" y1="937" x2="589" y2="902" stroke="#22cc66" stroke-width="1.3"/>
<path d="M586,906 L589,898 L592,906 Z" fill="#00b030"/>
<line x1="587.5" y1="937" x2="575" y2="926" stroke="#ff4466" stroke-width="1.1"/>
<circle cx="574.6" cy="926.8" r="2.4" fill="#e01020"/>
<line x1="587.5" y1="937" x2="616" y2="933" stroke="#1030e0" stroke-width="1.3"/>
<path d="M614,930 L622,932 L615,936 Z" fill="#001a80"/>
<text x="577" y="922" font-family="Liberation Sans" font-weight="bold" font-style="italic" font-size="15" fill="#ff1020">X</text>
<text x="593" y="901" font-family="Liberation Sans" font-weight="bold" font-style="italic" font-size="15" fill="#10e010">Y</text>
<text x="618" y="928" font-family="Liberation Sans" font-weight="bold" font-style="italic" font-size="15" fill="#0010ff">Z</text>
</g></svg>
<div class="t b" style="left:5.5px;top:6.0px;">Domain extents</div>
<div class="gb" style="left:6.0px;top:24.0px;width:501.0px;height:134.0px;"></div>
<div class="cb" style="left:376.0px;top:34.0px;width:14.0px;height:14.0px;"></div>
<div class="t " style="left:395.5px;top:34.3px;">2 Dimensional</div>
<div class="t" style="left:60px;width:100px;text-align:center;top:57px">X</div>
<div class="t" style="left:212px;width:100px;text-align:center;top:57px">Y</div>
<div class="t" style="left:363.5px;width:100px;text-align:center;top:57px">Z</div>
<div class="t " style="left:7.5px;top:80.7px;">Min</div>
<div class="in" style="left:38.4px;top:77.1px;width:145.2px;height:22.3px;"><span>-0.055</span></div>
<div class="in" style="left:189.5px;top:77.1px;width:145.5px;height:22.3px;"><span>0.01</span></div>
<div class="in" style="left:341.2px;top:77.1px;width:145.4px;height:22.3px;"><span>-0.1</span></div>
<div class="t " style="left:492.7px;top:80.7px;">m</div>
<div class="t " style="left:7.5px;top:108.7px;">Max</div>
<div class="in" style="left:38.4px;top:105.1px;width:145.2px;height:22.3px;"><span>0.055</span></div>
<div class="in" style="left:189.5px;top:105.1px;width:145.5px;height:22.3px;"><span>0.35</span></div>
<div class="in" style="left:341.2px;top:105.1px;width:145.4px;height:22.3px;"><span>0.18</span></div>
<div class="t " style="left:492.7px;top:108.7px;">m</div>
<div class="btn" style="left:407.5px;top:133.3px;width:79.1px;height:22.3px;">Autosize</div>
<div class="t b" style="left:5.5px;top:205.0px;">Geometry</div>
<div class="gb" style="left:6.0px;top:223.5px;width:501.0px;height:287.5px;background:#fff"></div>
<div class="a" style="left:7.0px;top:224.5px;width:499.0px;height:27.5px;background:#fafafa"></div>
<div class="a" style="left:8.0px;top:253.0px;width:496.0px;height:18.0px;background:#64b3f2"></div>
<div class="a" style="left:8.0px;top:253.0px;width:10.0px;height:18.0px;background:#2d87c8"></div>
<div class="t " style="left:63.5px;top:254.7px;color:#f4faff">flip_normals</div>
<div class="a" style="left:249px;top:513px;width:16px;height:2px;background:repeating-linear-gradient(90deg,#bdbdbd 0 1px,transparent 1px 3px)"></div>
<div class="t b" style="left:5.5px;top:517.0px;">Geometry parameters</div>
<div class="gb" style="left:6.0px;top:535.5px;width:501.0px;height:454.5px;"></div>
<div class="t " style="left:7.4px;top:545.6px;">Name</div>
<div class="in" style="left:49.5px;top:542.3px;width:454.5px;height:22.4px;"><span>flip_normals</span></div>
<div class="cb" style="left:17.0px;top:582.0px;width:14.0px;height:14.0px;"></div>
<div class="t " style="left:36.5px;top:581.7px;">Flip normals</div>
<div class="a" style="left:512.0px;top:0.0px;width:4.0px;height:982.0px;background:#dcdcdc"></div>
<div class="a" style="left:516.0px;top:0.0px;width:1.0px;height:982.0px;background:#8c8782"></div>
<div class="a" style="left:517.0px;top:0.0px;width:1.0px;height:982.0px;background:#ffffff"></div>
<div class="a" style="left:514px;top:500px;width:1px;height:16px;background:repeating-linear-gradient(180deg,#8a8a8a 0 1px,transparent 1px 3px)"></div>
<div class="a" style="left:518.0px;top:0.0px;width:698.0px;height:20.0px;background:#fcf9f6"></div>
<div class="a" style="left:1216.0px;top:0.0px;width:216.0px;height:982.0px;background:#fcf9f6"></div>
<div class="a" style="left:1432.0px;top:0.0px;width:2.0px;height:982.0px;background:#5a5754"></div>
<svg class="a" style="left:1228px;top:30px" width="10" height="12"><path d="M2.5,1.5 L7,6 L2.5,10.5" fill="none" stroke="#111" stroke-width="1.6"/></svg>
<div class="ib" style="left:1221.2px;top:53.2px;width:23.5px;height:22.5px;"></div><div class="t b" style="left:1250.5px;top:57.3px;">Geometry</div><div class="tri" style="left:1413.5px;top:61.8px;border-bottom-width:5px"></div>
<div class="t " style="left:1250.5px;top:85.0px;">Color</div>
<div class="sw" style="left:1302.2px;top:81.3px;width:23.5px;height:22.2px;background:linear-gradient(#f6f6f6,#e2e2e2);border:1px solid #9d9994"></div>
<div class="t " style="left:1250.5px;top:113.0px;">Style</div>
<div class="combo" style="left:1302.2px;top:109.2px;width:128.1px;height:22.3px;"><span>edges</span><i></i></div>
<div class="t " style="left:1250.5px;top:141.0px;">Opacity</div>
<div class="spin" style="left:1302.2px;top:138.4px;width:128.1px;height:20.1px;"><span>1.00</span><div class="sb"></div><div class="up"></div><div class="dn"></div></div>
<div class="cb" style="left:1250.4px;top:168.4px;width:13.6px;height:13.6px;"></div>
<div class="t " style="left:1269.2px;top:167.6px;">Show normals</div>
<div class="t " style="right:137.0px;top:195.0px">Scale</div>
<div class="in" style="left:1302.2px;top:191.1px;width:128.1px;height:22.3px;"><span>0.01</span></div>
<div class="t " style="right:137.0px;top:223.0px">Color</div>
<div class="sw" style="left:1302.2px;top:219.1px;width:23.5px;height:22.5px;background:linear-gradient(#7b7bff,#4848f0);border:1px solid #2a2ab0"></div>
<div class="t " style="right:137.0px;top:251.0px">Count</div>
<div class="in" style="left:1302.2px;top:247.1px;width:128.1px;height:22.3px;"><span>10000</span></div>
<div class="t b" style="left:1250.5px;top:294.5px;">Background mesh</div><div class="tri" style="left:1413.5px;top:299.0px;border-bottom-width:5px"></div>
<div class="t " style="left:1250.5px;top:322.0px;">Color</div>
<div class="sw" style="left:1302.2px;top:318.4px;width:23.5px;height:22.0px;background:linear-gradient(#b5dcff,#8cc4f8);border:1px solid #5a9fd8"></div>
<div class="t " style="left:1250.5px;top:350.0px;">Style</div>
<div class="combo" style="left:1302.2px;top:346.7px;width:128.1px;height:21.5px;"><span>wire</span><i></i></div>
<div class="t " style="left:1250.5px;top:378.0px;">Opacity</div>
<div class="spin" style="left:1302.2px;top:375.8px;width:128.1px;height:19.8px;"><span>1.00</span><div class="sb"></div><div class="up"></div><div class="dn"></div></div>
<div class="t b" style="left:1250.5px;top:411.0px;">Boundary mesh</div><div class="tri" style="left:1413.5px;top:415.5px;border-bottom-width:5px"></div>
<div class="t dis" style="left:1250.5px;top:439.0px;">Color by</div>
<div class="combo dis" style="left:1305.3px;top:435.7px;width:125.0px;height:21.7px;"><span>bc_id</span><i></i></div>
<div class="t dis" style="left:1250.5px;top:467.0px;">Style</div>
<div class="combo dis" style="left:1305.3px;top:463.5px;width:125.0px;height:21.7px;"><span>edges</span><i></i></div>
<div class="t dis" style="left:1250.5px;top:495.0px;">Opacity</div>
<div class="spin dis" style="left:1305.3px;top:492.6px;width:125.0px;height:20.0px;"><span>1.00</span><div class="sb"></div><div class="up"></div><div class="dn"></div></div>
<div class="ib" style="left:1221.2px;top:524.4px;width:23.5px;height:22.5px;"></div><div class="t b" style="left:1250.5px;top:528.0px;">Mesh</div><div class="tri" style="left:1413.5px;top:532.5px;border-bottom-width:5px"></div>
<div class="btn" style="left:1250.0px;top:552.1px;width:180.3px;height:22.9px;">Reload</div>
<div class="t " style="left:1250.5px;top:584.0px;">Color by</div>
<div class="combo dis" style="left:1317.0px;top:580.5px;width:113.3px;height:22.0px;"><span></span><i></i></div>
<div class="t " style="left:1250.5px;top:613.0px;">Color map</div>
<div class="combo dis" style="left:1317.0px;top:608.6px;width:113.3px;height:22.9px;"><span><b style="display:inline-block;width:14px;height:7px;vertical-align:1px;background:linear-gradient(90deg,#fff,#8a8a8a);margin-left:2px;margin-right:3px"></b>pinks</span><i></i></div>
<div class="t " style="left:1250.5px;top:641.0px;">Style</div>
<div class="combo dis" style="left:1317.0px;top:637.7px;width:113.3px;height:22.0px;"><span>solid</span><i></i></div>
<div class="t " style="left:1250.5px;top:669.0px;">Opacity</div>
<div class="spin dis" style="left:1317.0px;top:666.7px;width:113.3px;height:20.0px;"><span>1.00</span><div class="sb"></div><div class="up"></div><div class="dn"></div></div>
<div class="t b" style="left:1250.5px;top:702.7px;">Regions</div><div class="tri" style="left:1413.5px;top:707.2px;border-bottom-width:5px"></div>
<div class="t " style="left:1250.5px;top:730.0px;">Style</div>
<div class="combo" style="left:1302.3px;top:726.9px;width:128.0px;height:21.7px;"><span>solid</span><i></i></div>
<div class="t " style="left:1250.5px;top:758.0px;">Opacity</div>
<div class="spin" style="left:1302.3px;top:755.3px;width:128.0px;height:20.2px;"><span>0.50</span><div class="sb"></div><div class="up"></div><div class="dn"></div></div>
<div class="ib" style="left:1221.2px;top:787.4px;width:23.5px;height:22.3px;"></div>
<div class="t b" style="left:1250.5px;top:791.6px;">Axes</div><svg class="a" style="left:0;top:0;z-index:5" width="1434" height="982"><rect x="523.5" y="2.8" width="13" height="10.4" rx="1.2" fill="none" stroke="#111" stroke-width="1.6"/>
<rect x="529.4" y="4.9" width="1.3" height="1.3" fill="#111"/>
<rect x="525.9" y="7.4" width="1.3" height="1.3" fill="#111"/>
<rect x="532.9" y="7.4" width="1.3" height="1.3" fill="#111"/>
<rect x="529.4" y="9.9" width="1.3" height="1.3" fill="#111"/>
<path d="M548.1,1.5 V13.6 H560.6" fill="none" stroke="#7a7a7a" stroke-width="1.4"/>
<text x="0" y="11.6" font-family="Liberation Sans" font-size="11.5" font-weight="bold" letter-spacing="-0.9" fill="#111" transform="translate(549.6 0) scale(0.9 1) translate(0 0)">XY</text>
<path d="M572.1,1.5 V13.6 H584.6" fill="none" stroke="#7a7a7a" stroke-width="1.4"/>
<text x="0" y="11.6" font-family="Liberation Sans" font-size="11.5" font-weight="bold" letter-spacing="-0.9" fill="#111" transform="translate(573.6 0) scale(0.9 1) translate(0 0)">YZ</text>
<path d="M596.1,1.5 V13.6 H608.6" fill="none" stroke="#7a7a7a" stroke-width="1.4"/>
<text x="0" y="11.6" font-family="Liberation Sans" font-size="11.5" font-weight="bold" letter-spacing="-0.9" fill="#111" transform="translate(597.6 0) scale(0.9 1) translate(0 0)">XZ</text>
<path d="M625.8,2.8 A4.9,4.9 0 0 1 627.3,12.4" fill="none" stroke="#111" stroke-width="1.6"/>
<path d="M623.4,3.4 L627,0.6 L627,6.2 Z" fill="#111"/>
<circle cx="621.6" cy="5.6" r="0.9" fill="#111"/>
<circle cx="621.6" cy="9.6" r="0.9" fill="#111"/>
<circle cx="624.2" cy="12.3" r="0.9" fill="#111"/>
<path d="M649.7,2.8 A4.9,4.9 0 0 0 648.2,12.4" fill="none" stroke="#111" stroke-width="1.6"/>
<path d="M652.1,3.4 L648.5,0.6 L648.5,6.2 Z" fill="#111"/>
<circle cx="653.9" cy="5.6" r="0.9" fill="#111"/>
<circle cx="653.9" cy="9.6" r="0.9" fill="#111"/>
<circle cx="651.3" cy="12.3" r="0.9" fill="#111"/>
<path d="M668.8,5.5 L672.5,2.3 H679.6 V9.5 L676,12.8 H668.8 Z M668.8,5.5 H676 V12.8 M676,5.5 L679.6,2.3 M668.8,12.8 L679.6,2.3" fill="none" stroke="#111" stroke-width="1.4" stroke-linejoin="round"/>
<path d="M691,4.2 Q691,3.4 692,3.4 H694.5 L695.8,1.5 H700 L701.3,3.4 H704 Q705,3.4 705,4.2 V12.2 Q705,13 704,13 H692 Q691,13 691,12.2 Z" fill="#111"/>
<circle cx="698" cy="8" r="2.7" fill="none" stroke="#fff" stroke-width="1.4"/>
<g transform="translate(719.8 2.8) scale(1.0)" fill="none" stroke="#111" stroke-width="1.5" stroke-linejoin="round"><path d="M2.2,0.5 L10.8,1.8 L10.5,8.8 L5.2,10.8 L0.2,7 Z"/><path d="M2.2,0.5 L3.5,5.2 L10.5,8.8 M3.5,5.2 L0.2,7 M3.5,5.2 L5.2,10.8 M3.5,5.2 L10.8,1.8" stroke-width="1.1"/></g>
<circle cx="749.2" cy="7.6" r="5.6" fill="none" stroke="#111" stroke-width="1.4"/><path d="M743.8,7.2 Q749,8.2 754.6,6.8 M749.2,2 Q748.2,7 750,13" fill="none" stroke="#111" stroke-width="1.2"/>
<path d="M766.8,4.8 L770,1.8 H779.2 V10.5 L776,13.6 H766.8 Z M766.8,4.8 H776 V13.6 M776,4.8 L779.2,1.8" fill="none" stroke="#111" stroke-width="1.4" stroke-linejoin="round"/>
<ellipse cx="796.8" cy="4.2" rx="5.1" ry="2.3" fill="none" stroke="#111" stroke-width="1.4"/><path d="M791.7,4.2 V11 A5.1,2.4 0 0 0 801.9,11 V4.2" fill="none" stroke="#111" stroke-width="1.4"/>
<path d="M821,1.5 L815,10.5 Q814.5,13 821,13 Q827.5,13 827,10.5 Z" fill="none" stroke="#111" stroke-width="1.4" stroke-linejoin="round"/>
<ellipse cx="845" cy="8" rx="6.2" ry="4.4" fill="none" stroke="#111" stroke-width="1.4"/><path d="M842.5,7.5 Q845,9.5 847.5,7.5" fill="none" stroke="#111" stroke-width="1.4"/>
<g transform="translate(14.5 231) scale(0.98)" fill="none" stroke="#000" stroke-width="1.5" stroke-linejoin="round"><path d="M2.2,0.5 L10.8,1.8 L10.5,8.8 L5.2,10.8 L0.2,7 Z"/><path d="M2.2,0.5 L3.5,5.2 L10.5,8.8 M3.5,5.2 L0.2,7 M3.5,5.2 L5.2,10.8 M3.5,5.2 L10.8,1.8" stroke-width="1.1"/></g>
<path d="M24.3,241.2 h6 l-3,3 z" fill="#444"/>
<g transform="translate(38 230)"><rect x="0" y="0" width="12" height="12" rx="1.6" fill="#000"/><path d="M6,1.2 H10.9 V10.6 L6,5.4 Z M1.1,10.9 L6,5.4 V10.9 Z" fill="#fff"/></g>
<path d="M48.2,241.2 h6 l-3,3 z" fill="#444"/>
<path d="M63.5,241.5 L70.5,234.5" stroke="#000" stroke-width="1.5"/><path d="M64.5,232.3 l1,-1.5 l1,1.5 l-1,1.5z M68.5,231 l0.8,-1.2 l0.8,1.2 l-0.8,1.2z M72.5,236.8 h1.6 v1.6 h-1.6z M71.5,232.5 h1.2 v1.2 h-1.2z" fill="#000"/>
<path d="M72,241.2 h6 l-3,3 z" fill="#444"/>
<rect x="87" y="235" width="9.7" height="2" fill="#3a3a3a"/>
<path d="M109.5,240.5 V229.5 H118" fill="none" stroke="#111" stroke-width="1.4"/><rect x="112" y="231.8" width="10" height="10.5" rx="1" fill="none" stroke="#111" stroke-width="1.5"/>
<path d="M438,230 H446 V234 H450 V242 H442 V238 H438 Z" fill="#5a5a5a"/>
<rect x="462.6" y="230.6" width="7" height="7" fill="none" stroke="#5a5a5a" stroke-width="1.2"/><rect x="466.6" y="234.6" width="7" height="7" fill="none" stroke="#5a5a5a" stroke-width="1.2"/><rect x="466.6" y="234.6" width="3" height="3" fill="#5a5a5a"/>
<path d="M486,230 H494 V234 H490 V238 H486 Z" fill="#5a5a5a"/><rect x="490.6" y="234.6" width="7" height="7" fill="#fff" stroke="#5a5a5a" stroke-width="1.2"/>
<path d="M10,258 L15,262 L10,266 Z" fill="#173448"/>
<path d="M21.6,261.8 Q27.9,253.8 34.2,261.8 Q27.9,269.8 21.6,261.8 Z" fill="#000"/><circle cx="27.9" cy="261.8" r="2.2" fill="none" stroke="#fff" stroke-width="1.2"/><circle cx="27.9" cy="261.8" r="1.2" fill="#000"/>
<g transform="translate(43.1 256.1)"><rect x="0" y="0" width="12" height="12" rx="1.6" fill="#102a3c"/><path d="M6,1.2 H10.9 V10.6 L6,5.4 Z M1.1,10.9 L6,5.4 V10.9 Z" fill="#64b3f2"/></g>
<path d="M20.2,588.8 l2.6,4.6 l5.2,-9.4" fill="none" stroke="#000" stroke-width="1.7" stroke-linejoin="miter"/>
<path d="M1253.6000000000001,175.20000000000002 l2.6,4.6 l5.2,-9.4" fill="none" stroke="#000" stroke-width="1.7" stroke-linejoin="miter"/>
<g transform="translate(1227.5 58.8) scale(1.0)" fill="none" stroke="#000" stroke-width="1.5" stroke-linejoin="round"><path d="M2.2,0.5 L10.8,1.8 L10.5,8.8 L5.2,10.8 L0.2,7 Z"/><path d="M2.2,0.5 L3.5,5.2 L10.5,8.8 M3.5,5.2 L0.2,7 M3.5,5.2 L5.2,10.8 M3.5,5.2 L10.8,1.8" stroke-width="1.1"/></g>
<rect x="1226" y="294.6" width="13.8" height="13.2" rx="1.5" fill="#111"/>
<rect x="1228.2" y="296.7" width="2.4" height="2.4" rx="0.6" fill="#fcf9f6"/>
<rect x="1228.2" y="300.5" width="2.4" height="2.4" rx="0.6" fill="#fcf9f6"/>
<rect x="1228.2" y="304.3" width="2.4" height="2.4" rx="0.6" fill="#fcf9f6"/>
<rect x="1232.1000000000001" y="296.7" width="2.4" height="2.4" rx="0.6" fill="#fcf9f6"/>
<rect x="1232.1000000000001" y="300.5" width="2.4" height="2.4" rx="0.6" fill="#fcf9f6"/>
<rect x="1232.1000000000001" y="304.3" width="2.4" height="2.4" rx="0.6" fill="#fcf9f6"/>
<rect x="1236.0" y="296.7" width="2.4" height="2.4" rx="0.6" fill="#fcf9f6"/>
<rect x="1236.0" y="300.5" width="2.4" height="2.4" rx="0.6" fill="#fcf9f6"/>
<rect x="1236.0" y="304.3" width="2.4" height="2.4" rx="0.6" fill="#fcf9f6"/>
<rect x="1227.5" y="412.5" width="11" height="11" fill="#fff" stroke="#4a4744" stroke-width="1.2"/><path d="M1232,415.8 h2 M1232,420.8 h2 M1230.3,417.3 v2 M1235.7,417.3 v2" stroke="#555" stroke-width="0.9"/><rect x="1232.5" y="417.6" width="1.2" height="1.2" fill="#999"/>
<g fill="none" stroke="#555" stroke-width="1.1"><path d="M1226.6,531.2 L1228.5,528.5 H1240 V539.5 L1238,542 H1226.6 Z M1226.6,531.2 H1238 V542 M1238,531.2 L1240,528.5"/><path d="M1229.5,533.5 v6 M1232.5,533 v7 M1235.5,533.5 v6 M1228,536.5 h8.5" stroke-width="0.8" stroke-opacity="0.8"/></g>
<path d="M1226.8,705 L1229.3,702.5 H1239.5 V713 L1237,715.5 H1226.8 Z M1226.8,705 H1237 V715.5 M1237,705 L1239.5,702.5" fill="none" stroke="#111" stroke-width="1.3"/><rect x="1229" y="707" width="6" height="6.3" fill="none" stroke="#111" stroke-width="0.9"/>
<path d="M1231.4,791.4 V801.6 H1239.7 M1231.4,801.6 L1226.7,804.8" fill="none" stroke="#111" stroke-width="1.4"/></svg></body></html>
